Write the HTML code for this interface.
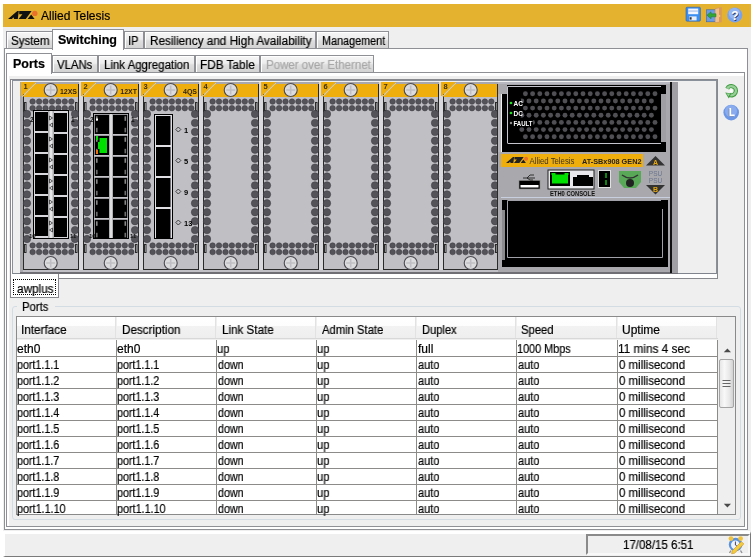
<!DOCTYPE html>
<html><head><meta charset="utf-8">
<style>
*{margin:0;padding:0;box-sizing:border-box}
html,body{width:754px;height:559px;overflow:hidden;background:#fff}
body{position:relative;font-family:"Liberation Sans",sans-serif;font-size:12px;color:#000}
.a{position:absolute}
.t{position:absolute;white-space:nowrap;line-height:12px;font-size:12px;transform-origin:0 0;will-change:transform;-webkit-text-stroke:0.2px currentColor}
.tab{position:absolute;border:1px solid #8f9095;border-bottom:none;background:linear-gradient(#f6f6f6,#ededed 45%,#dedede 55%,#d3d3d3);box-shadow:inset 1px 1px 0 #fff}
.tabsel{position:absolute;border:1px solid #8f9095;border-bottom:none;background:#fff}
.hc{position:absolute;top:317px;height:21px;background:linear-gradient(#fff 0,#fdfdfd 42%,#f2f2f2 44%,#eeeeee 100%);border-right:1px solid #e2e2e2}
.vl{position:absolute;width:1px;background:#8d8a8a}
.hl{position:absolute;height:1px;background:#8d8a8a}
svg text{font-family:"Liberation Sans",sans-serif}
</style></head><body>
<!-- app bg -->
<div class="a" style="left:3px;top:27px;width:748px;height:530px;background:#efefef"></div>
<!-- title bar -->
<div class="a" style="left:3px;top:4px;width:748px;height:23px;background:#e5b22f"></div>
<svg class="a" style="left:0;top:0" width="120" height="27">
<path d="M8 19L17.3 11H18.8L17.8 19H14.2L13.3 17.3L12 19Z" fill="#111"/>
<path d="M19.2 11H31.6L25.8 19H18.6L22.4 14.2H19.2Z" fill="#111"/>
<path d="M27.6 19L31.2 14.4L34.6 19Z" fill="#111"/>
<circle cx="34.8" cy="13.4" r="2.7" fill="#e8702a"/>
</svg>
<div class="t" style="left:41px;top:10px">Allied Telesis</div>
<svg class="a" style="left:680px;top:5px" width="70" height="22">
<rect x="6" y="2.2" width="14.4" height="14" rx="1" fill="#3b8ff0" stroke="#2a5fb0" stroke-width="0.6"/>
<rect x="8.2" y="3.6" width="10" height="5.6" fill="#f4f6ff"/>
<rect x="8.2" y="5.6" width="10" height="0.9" fill="#8fb0e0"/>
<rect x="9.2" y="11.4" width="7.4" height="4" fill="#e8ecf4"/><rect x="9.6" y="12.2" width="2" height="2.4" fill="#333"/>
<rect x="26.5" y="4.8" width="9" height="12" fill="#6c9ce4" stroke="#3a64a8" stroke-width="0.6"/>
<path d="M35 3.2L41.8 2v15.2L35 18z" fill="#d9995a"/>
<path d="M35.6 4L39 3.2v13.5l-3.4 0.6z" fill="#f0c08a"/>
<circle cx="39.6" cy="11" r="0.7" fill="#ffe080"/>
<path d="M27 10.2l4-3.4v2h5v3h-5v2z" fill="#34a834" stroke="#1f7a1f" stroke-width="0.5"/>
<circle cx="54.8" cy="10" r="7.6" fill="#7aa2ea"/>
<circle cx="54.3" cy="8.3" r="5.6" fill="#a8c4f6" opacity="0.55"/>
<text x="55.6" y="15.6" font-size="12" font-weight="bold" text-anchor="middle" fill="#2a3a70">?</text><text x="55" y="15" font-size="12" font-weight="bold" text-anchor="middle" fill="#fff">?</text>
</svg>

<!-- tab row 1 -->
<div class="tab" style="left:6px;top:31px;width:47px;height:17px"></div>
<div class="t" style="left:11px;top:35px;transform:scaleX(0.963)">System</div>
<div class="tab" style="left:124px;top:31px;width:20px;height:17px"></div>
<div class="t" style="left:128px;top:35px;transform:scaleX(0.93)">IP</div>
<div class="tab" style="left:144px;top:31px;width:172px;height:17px"></div>
<div class="t" style="left:150px;top:35px;transform:scaleX(0.978)">Resiliency and High Availability</div>
<div class="tab" style="left:316px;top:31px;width:73px;height:17px"></div>
<div class="t" style="left:322px;top:35px;transform:scaleX(0.903)">Management</div>
<!-- outer panel -->
<div class="a" style="left:4px;top:48px;width:744px;height:482px;border:1px solid #8f9095;background:#fff"></div>
<div class="tabsel" style="left:52px;top:29px;width:72px;height:21px"></div>
<div class="t" style="left:58px;top:34px;font-weight:bold;transform:scaleX(1.04)">Switching</div>

<!-- tab row 2 -->
<div class="tab" style="left:52px;top:55px;width:46px;height:17px"></div>
<div class="t" style="left:57px;top:59px;transform:scaleX(0.946)">VLANs</div>
<div class="tab" style="left:98px;top:55px;width:97px;height:17px"></div>
<div class="t" style="left:104px;top:59px;transform:scaleX(0.955)">Link Aggregation</div>
<div class="tab" style="left:195px;top:55px;width:65px;height:17px"></div>
<div class="t" style="left:200px;top:59px;transform:scaleX(0.982)">FDB Table</div>
<div class="tab" style="left:260px;top:55px;width:114px;height:17px"></div>
<div class="t" style="left:266px;top:59px;color:#a8a8a8;transform:scaleX(0.958)">Power over Ethernet</div>
<!-- inner panel -->
<div class="a" style="left:6px;top:72px;width:739px;height:455px;border:1px solid #8f9095;background:#fff"></div>
<div class="a" style="left:9px;top:76px;width:735px;height:450px;background:#efefef"></div>
<div class="tabsel" style="left:6px;top:53px;width:46px;height:21px"></div>
<div class="t" style="left:13px;top:58px;font-weight:bold;transform:scaleX(1.04)">Ports</div>

<!-- device frame -->
<div class="a" style="left:10px;top:79px;width:708px;height:200px;border:1px solid #88898e;background:#fff"></div>
<div class="a" style="left:12px;top:80px;width:705px;height:194px;border:1px solid #8a909a;border-bottom:1px solid #80848c;background:#efefef"></div>
<svg class="a" style="left:0;top:0;will-change:transform" width="754" height="559" viewBox="0 0 754 559">
<defs><linearGradient id="slv" x1="0" x2="1"><stop offset="0" stop-color="#9a9a9e"/><stop offset="0.5" stop-color="#f4f4f6"/><stop offset="1" stop-color="#9a9a9e"/></linearGradient></defs>
<rect x="20" y="82" width="658" height="191" fill="#a9a9ad"/>
<rect x="23" y="270" width="655" height="2" fill="#c0c0c6"/>
<rect x="20" y="272" width="658" height="2" fill="#6e6e74"/>
<rect x="79" y="82" width="4" height="188" fill="#d9d9dd"/>
<rect x="78" y="84" width="1" height="186" fill="#2a2a2a"/>
<rect x="83" y="84" width="1" height="186" fill="#2a2a2a"/>
<rect x="24" y="84" width="54" height="185" fill="#bfbfc4"/>
<rect x="23" y="84" width="1" height="186" fill="#2a2a2a"/>
<rect x="23" y="269" width="56" height="1" fill="#2a2a2a"/>
<polygon points="35,84 78,84 78,97 23,97" fill="#f0ae0c"/>
<polygon points="21,82 36,82 22,96 21,96" fill="#f0ae0c"/>
<line x1="36" y1="83" x2="22" y2="97" stroke="#d0ccb8" stroke-width="1"/>
<text x="23.5" y="88.5" font-size="7.5" font-weight="bold" fill="#3a3000">1</text>
<circle cx="50.7" cy="90" r="6.5" fill="#dcdcdf" stroke="#4a4a50" stroke-width="1.1"/>
<path d="M50.7 85.5V94.5M46.2 90H55.2" stroke="#c0c0c4" stroke-width="1.6"/>
<circle cx="50.7" cy="263" r="6.5" fill="#dcdcdf" stroke="#4a4a50" stroke-width="1.1"/>
<path d="M50.7 258.5V267.5M46.2 263H55.2" stroke="#c0c0c4" stroke-width="1.6"/>
<circle cx="32.6" cy="101.6" r="2.75" fill="#545359" stroke="#3a393e" stroke-width="0.5"/>
<circle cx="39.1" cy="101.6" r="2.75" fill="#545359" stroke="#3a393e" stroke-width="0.5"/>
<circle cx="45.5" cy="101.6" r="2.75" fill="#545359" stroke="#3a393e" stroke-width="0.5"/>
<circle cx="52.0" cy="101.6" r="2.75" fill="#545359" stroke="#3a393e" stroke-width="0.5"/>
<circle cx="58.4" cy="101.6" r="2.75" fill="#545359" stroke="#3a393e" stroke-width="0.5"/>
<circle cx="64.8" cy="101.6" r="2.75" fill="#545359" stroke="#3a393e" stroke-width="0.5"/>
<circle cx="71.3" cy="101.6" r="2.75" fill="#545359" stroke="#3a393e" stroke-width="0.5"/>
<circle cx="32.6" cy="108.2" r="2.75" fill="#545359" stroke="#3a393e" stroke-width="0.5"/>
<circle cx="39.1" cy="108.2" r="2.75" fill="#545359" stroke="#3a393e" stroke-width="0.5"/>
<circle cx="45.5" cy="108.2" r="2.75" fill="#545359" stroke="#3a393e" stroke-width="0.5"/>
<circle cx="52.0" cy="108.2" r="2.75" fill="#545359" stroke="#3a393e" stroke-width="0.5"/>
<circle cx="58.4" cy="108.2" r="2.75" fill="#545359" stroke="#3a393e" stroke-width="0.5"/>
<circle cx="64.8" cy="108.2" r="2.75" fill="#545359" stroke="#3a393e" stroke-width="0.5"/>
<circle cx="71.3" cy="108.2" r="2.75" fill="#545359" stroke="#3a393e" stroke-width="0.5"/>
<circle cx="32.6" cy="245.5" r="2.75" fill="#545359" stroke="#3a393e" stroke-width="0.5"/>
<circle cx="39.1" cy="245.5" r="2.75" fill="#545359" stroke="#3a393e" stroke-width="0.5"/>
<circle cx="45.5" cy="245.5" r="2.75" fill="#545359" stroke="#3a393e" stroke-width="0.5"/>
<circle cx="52.0" cy="245.5" r="2.75" fill="#545359" stroke="#3a393e" stroke-width="0.5"/>
<circle cx="58.4" cy="245.5" r="2.75" fill="#545359" stroke="#3a393e" stroke-width="0.5"/>
<circle cx="64.8" cy="245.5" r="2.75" fill="#545359" stroke="#3a393e" stroke-width="0.5"/>
<circle cx="71.3" cy="245.5" r="2.75" fill="#545359" stroke="#3a393e" stroke-width="0.5"/>
<circle cx="32.6" cy="252.1" r="2.75" fill="#545359" stroke="#3a393e" stroke-width="0.5"/>
<circle cx="39.1" cy="252.1" r="2.75" fill="#545359" stroke="#3a393e" stroke-width="0.5"/>
<circle cx="45.5" cy="252.1" r="2.75" fill="#545359" stroke="#3a393e" stroke-width="0.5"/>
<circle cx="52.0" cy="252.1" r="2.75" fill="#545359" stroke="#3a393e" stroke-width="0.5"/>
<circle cx="58.4" cy="252.1" r="2.75" fill="#545359" stroke="#3a393e" stroke-width="0.5"/>
<circle cx="64.8" cy="252.1" r="2.75" fill="#545359" stroke="#3a393e" stroke-width="0.5"/>
<circle cx="71.3" cy="252.1" r="2.75" fill="#545359" stroke="#3a393e" stroke-width="0.5"/>
<rect x="24.5" y="102.5" width="1.5" height="8" fill="#e0e0e4" stroke="#2a2a2a" stroke-width="1"/>
<rect x="75.5" y="102.5" width="1.5" height="8" fill="#e0e0e4" stroke="#2a2a2a" stroke-width="1"/>
<rect x="24.5" y="244.5" width="1.5" height="8" fill="#e0e0e4" stroke="#2a2a2a" stroke-width="1"/>
<rect x="75.5" y="244.5" width="1.5" height="8" fill="#e0e0e4" stroke="#2a2a2a" stroke-width="1"/>
<circle cx="27" cy="114.0" r="3.7" fill="#545359" stroke="#3a393e" stroke-width="0.5"/>
<circle cx="75" cy="114.0" r="3.7" fill="#545359" stroke="#3a393e" stroke-width="0.5"/>
<circle cx="27" cy="122.9" r="3.7" fill="#545359" stroke="#3a393e" stroke-width="0.5"/>
<circle cx="75" cy="122.9" r="3.7" fill="#545359" stroke="#3a393e" stroke-width="0.5"/>
<circle cx="27" cy="131.9" r="3.7" fill="#545359" stroke="#3a393e" stroke-width="0.5"/>
<circle cx="75" cy="131.9" r="3.7" fill="#545359" stroke="#3a393e" stroke-width="0.5"/>
<circle cx="27" cy="140.8" r="3.7" fill="#545359" stroke="#3a393e" stroke-width="0.5"/>
<circle cx="75" cy="140.8" r="3.7" fill="#545359" stroke="#3a393e" stroke-width="0.5"/>
<circle cx="27" cy="149.7" r="3.7" fill="#545359" stroke="#3a393e" stroke-width="0.5"/>
<circle cx="75" cy="149.7" r="3.7" fill="#545359" stroke="#3a393e" stroke-width="0.5"/>
<circle cx="27" cy="158.7" r="3.7" fill="#545359" stroke="#3a393e" stroke-width="0.5"/>
<circle cx="75" cy="158.7" r="3.7" fill="#545359" stroke="#3a393e" stroke-width="0.5"/>
<circle cx="27" cy="167.6" r="3.7" fill="#545359" stroke="#3a393e" stroke-width="0.5"/>
<circle cx="75" cy="167.6" r="3.7" fill="#545359" stroke="#3a393e" stroke-width="0.5"/>
<circle cx="27" cy="176.5" r="3.7" fill="#545359" stroke="#3a393e" stroke-width="0.5"/>
<circle cx="75" cy="176.5" r="3.7" fill="#545359" stroke="#3a393e" stroke-width="0.5"/>
<circle cx="27" cy="185.4" r="3.7" fill="#545359" stroke="#3a393e" stroke-width="0.5"/>
<circle cx="75" cy="185.4" r="3.7" fill="#545359" stroke="#3a393e" stroke-width="0.5"/>
<circle cx="27" cy="194.4" r="3.7" fill="#545359" stroke="#3a393e" stroke-width="0.5"/>
<circle cx="75" cy="194.4" r="3.7" fill="#545359" stroke="#3a393e" stroke-width="0.5"/>
<circle cx="27" cy="203.3" r="3.7" fill="#545359" stroke="#3a393e" stroke-width="0.5"/>
<circle cx="75" cy="203.3" r="3.7" fill="#545359" stroke="#3a393e" stroke-width="0.5"/>
<circle cx="27" cy="212.2" r="3.7" fill="#545359" stroke="#3a393e" stroke-width="0.5"/>
<circle cx="75" cy="212.2" r="3.7" fill="#545359" stroke="#3a393e" stroke-width="0.5"/>
<circle cx="27" cy="221.2" r="3.7" fill="#545359" stroke="#3a393e" stroke-width="0.5"/>
<circle cx="75" cy="221.2" r="3.7" fill="#545359" stroke="#3a393e" stroke-width="0.5"/>
<circle cx="27" cy="230.1" r="3.7" fill="#545359" stroke="#3a393e" stroke-width="0.5"/>
<circle cx="75" cy="230.1" r="3.7" fill="#545359" stroke="#3a393e" stroke-width="0.5"/>
<circle cx="27" cy="239.0" r="3.7" fill="#545359" stroke="#3a393e" stroke-width="0.5"/>
<circle cx="75" cy="239.0" r="3.7" fill="#545359" stroke="#3a393e" stroke-width="0.5"/>
<rect x="139" y="82" width="4" height="188" fill="#d9d9dd"/>
<rect x="138" y="84" width="1" height="186" fill="#2a2a2a"/>
<rect x="143" y="84" width="1" height="186" fill="#2a2a2a"/>
<rect x="84" y="84" width="54" height="185" fill="#bfbfc4"/>
<rect x="83" y="84" width="1" height="186" fill="#2a2a2a"/>
<rect x="83" y="269" width="56" height="1" fill="#2a2a2a"/>
<polygon points="95,84 138,84 138,97 83,97" fill="#f0ae0c"/>
<polygon points="81,82 96,82 82,96 81,96" fill="#f0ae0c"/>
<line x1="96" y1="83" x2="82" y2="97" stroke="#d0ccb8" stroke-width="1"/>
<text x="83.5" y="88.5" font-size="7.5" font-weight="bold" fill="#3a3000">2</text>
<circle cx="110.7" cy="90" r="6.5" fill="#dcdcdf" stroke="#4a4a50" stroke-width="1.1"/>
<path d="M110.7 85.5V94.5M106.2 90H115.2" stroke="#c0c0c4" stroke-width="1.6"/>
<circle cx="110.7" cy="263" r="6.5" fill="#dcdcdf" stroke="#4a4a50" stroke-width="1.1"/>
<path d="M110.7 258.5V267.5M106.2 263H115.2" stroke="#c0c0c4" stroke-width="1.6"/>
<circle cx="92.6" cy="101.6" r="2.75" fill="#545359" stroke="#3a393e" stroke-width="0.5"/>
<circle cx="99.0" cy="101.6" r="2.75" fill="#545359" stroke="#3a393e" stroke-width="0.5"/>
<circle cx="105.5" cy="101.6" r="2.75" fill="#545359" stroke="#3a393e" stroke-width="0.5"/>
<circle cx="111.9" cy="101.6" r="2.75" fill="#545359" stroke="#3a393e" stroke-width="0.5"/>
<circle cx="118.4" cy="101.6" r="2.75" fill="#545359" stroke="#3a393e" stroke-width="0.5"/>
<circle cx="124.8" cy="101.6" r="2.75" fill="#545359" stroke="#3a393e" stroke-width="0.5"/>
<circle cx="131.3" cy="101.6" r="2.75" fill="#545359" stroke="#3a393e" stroke-width="0.5"/>
<circle cx="92.6" cy="108.2" r="2.75" fill="#545359" stroke="#3a393e" stroke-width="0.5"/>
<circle cx="99.0" cy="108.2" r="2.75" fill="#545359" stroke="#3a393e" stroke-width="0.5"/>
<circle cx="105.5" cy="108.2" r="2.75" fill="#545359" stroke="#3a393e" stroke-width="0.5"/>
<circle cx="111.9" cy="108.2" r="2.75" fill="#545359" stroke="#3a393e" stroke-width="0.5"/>
<circle cx="118.4" cy="108.2" r="2.75" fill="#545359" stroke="#3a393e" stroke-width="0.5"/>
<circle cx="124.8" cy="108.2" r="2.75" fill="#545359" stroke="#3a393e" stroke-width="0.5"/>
<circle cx="131.3" cy="108.2" r="2.75" fill="#545359" stroke="#3a393e" stroke-width="0.5"/>
<circle cx="92.6" cy="245.5" r="2.75" fill="#545359" stroke="#3a393e" stroke-width="0.5"/>
<circle cx="99.0" cy="245.5" r="2.75" fill="#545359" stroke="#3a393e" stroke-width="0.5"/>
<circle cx="105.5" cy="245.5" r="2.75" fill="#545359" stroke="#3a393e" stroke-width="0.5"/>
<circle cx="111.9" cy="245.5" r="2.75" fill="#545359" stroke="#3a393e" stroke-width="0.5"/>
<circle cx="118.4" cy="245.5" r="2.75" fill="#545359" stroke="#3a393e" stroke-width="0.5"/>
<circle cx="124.8" cy="245.5" r="2.75" fill="#545359" stroke="#3a393e" stroke-width="0.5"/>
<circle cx="131.3" cy="245.5" r="2.75" fill="#545359" stroke="#3a393e" stroke-width="0.5"/>
<circle cx="92.6" cy="252.1" r="2.75" fill="#545359" stroke="#3a393e" stroke-width="0.5"/>
<circle cx="99.0" cy="252.1" r="2.75" fill="#545359" stroke="#3a393e" stroke-width="0.5"/>
<circle cx="105.5" cy="252.1" r="2.75" fill="#545359" stroke="#3a393e" stroke-width="0.5"/>
<circle cx="111.9" cy="252.1" r="2.75" fill="#545359" stroke="#3a393e" stroke-width="0.5"/>
<circle cx="118.4" cy="252.1" r="2.75" fill="#545359" stroke="#3a393e" stroke-width="0.5"/>
<circle cx="124.8" cy="252.1" r="2.75" fill="#545359" stroke="#3a393e" stroke-width="0.5"/>
<circle cx="131.3" cy="252.1" r="2.75" fill="#545359" stroke="#3a393e" stroke-width="0.5"/>
<rect x="84.5" y="102.5" width="1.5" height="8" fill="#e0e0e4" stroke="#2a2a2a" stroke-width="1"/>
<rect x="135.5" y="102.5" width="1.5" height="8" fill="#e0e0e4" stroke="#2a2a2a" stroke-width="1"/>
<rect x="84.5" y="244.5" width="1.5" height="8" fill="#e0e0e4" stroke="#2a2a2a" stroke-width="1"/>
<rect x="135.5" y="244.5" width="1.5" height="8" fill="#e0e0e4" stroke="#2a2a2a" stroke-width="1"/>
<circle cx="87" cy="114.0" r="3.7" fill="#545359" stroke="#3a393e" stroke-width="0.5"/>
<circle cx="135" cy="114.0" r="3.7" fill="#545359" stroke="#3a393e" stroke-width="0.5"/>
<circle cx="87" cy="122.9" r="3.7" fill="#545359" stroke="#3a393e" stroke-width="0.5"/>
<circle cx="135" cy="122.9" r="3.7" fill="#545359" stroke="#3a393e" stroke-width="0.5"/>
<circle cx="87" cy="131.9" r="3.7" fill="#545359" stroke="#3a393e" stroke-width="0.5"/>
<circle cx="135" cy="131.9" r="3.7" fill="#545359" stroke="#3a393e" stroke-width="0.5"/>
<circle cx="87" cy="140.8" r="3.7" fill="#545359" stroke="#3a393e" stroke-width="0.5"/>
<circle cx="135" cy="140.8" r="3.7" fill="#545359" stroke="#3a393e" stroke-width="0.5"/>
<circle cx="87" cy="149.7" r="3.7" fill="#545359" stroke="#3a393e" stroke-width="0.5"/>
<circle cx="135" cy="149.7" r="3.7" fill="#545359" stroke="#3a393e" stroke-width="0.5"/>
<circle cx="87" cy="158.7" r="3.7" fill="#545359" stroke="#3a393e" stroke-width="0.5"/>
<circle cx="135" cy="158.7" r="3.7" fill="#545359" stroke="#3a393e" stroke-width="0.5"/>
<circle cx="87" cy="167.6" r="3.7" fill="#545359" stroke="#3a393e" stroke-width="0.5"/>
<circle cx="135" cy="167.6" r="3.7" fill="#545359" stroke="#3a393e" stroke-width="0.5"/>
<circle cx="87" cy="176.5" r="3.7" fill="#545359" stroke="#3a393e" stroke-width="0.5"/>
<circle cx="135" cy="176.5" r="3.7" fill="#545359" stroke="#3a393e" stroke-width="0.5"/>
<circle cx="87" cy="185.4" r="3.7" fill="#545359" stroke="#3a393e" stroke-width="0.5"/>
<circle cx="135" cy="185.4" r="3.7" fill="#545359" stroke="#3a393e" stroke-width="0.5"/>
<circle cx="87" cy="194.4" r="3.7" fill="#545359" stroke="#3a393e" stroke-width="0.5"/>
<circle cx="135" cy="194.4" r="3.7" fill="#545359" stroke="#3a393e" stroke-width="0.5"/>
<circle cx="87" cy="203.3" r="3.7" fill="#545359" stroke="#3a393e" stroke-width="0.5"/>
<circle cx="135" cy="203.3" r="3.7" fill="#545359" stroke="#3a393e" stroke-width="0.5"/>
<circle cx="87" cy="212.2" r="3.7" fill="#545359" stroke="#3a393e" stroke-width="0.5"/>
<circle cx="135" cy="212.2" r="3.7" fill="#545359" stroke="#3a393e" stroke-width="0.5"/>
<circle cx="87" cy="221.2" r="3.7" fill="#545359" stroke="#3a393e" stroke-width="0.5"/>
<circle cx="135" cy="221.2" r="3.7" fill="#545359" stroke="#3a393e" stroke-width="0.5"/>
<circle cx="87" cy="230.1" r="3.7" fill="#545359" stroke="#3a393e" stroke-width="0.5"/>
<circle cx="135" cy="230.1" r="3.7" fill="#545359" stroke="#3a393e" stroke-width="0.5"/>
<circle cx="87" cy="239.0" r="3.7" fill="#545359" stroke="#3a393e" stroke-width="0.5"/>
<circle cx="135" cy="239.0" r="3.7" fill="#545359" stroke="#3a393e" stroke-width="0.5"/>
<rect x="199" y="82" width="4" height="188" fill="#d9d9dd"/>
<rect x="198" y="84" width="1" height="186" fill="#2a2a2a"/>
<rect x="203" y="84" width="1" height="186" fill="#2a2a2a"/>
<rect x="144" y="84" width="54" height="185" fill="#bfbfc4"/>
<rect x="143" y="84" width="1" height="186" fill="#2a2a2a"/>
<rect x="143" y="269" width="56" height="1" fill="#2a2a2a"/>
<polygon points="155,84 198,84 198,97 143,97" fill="#f0ae0c"/>
<polygon points="141,82 156,82 142,96 141,96" fill="#f0ae0c"/>
<line x1="156" y1="83" x2="142" y2="97" stroke="#d0ccb8" stroke-width="1"/>
<text x="143.5" y="88.5" font-size="7.5" font-weight="bold" fill="#3a3000">3</text>
<circle cx="170.7" cy="90" r="6.5" fill="#dcdcdf" stroke="#4a4a50" stroke-width="1.1"/>
<path d="M170.7 85.5V94.5M166.2 90H175.2" stroke="#c0c0c4" stroke-width="1.6"/>
<circle cx="170.7" cy="263" r="6.5" fill="#dcdcdf" stroke="#4a4a50" stroke-width="1.1"/>
<path d="M170.7 258.5V267.5M166.2 263H175.2" stroke="#c0c0c4" stroke-width="1.6"/>
<circle cx="152.6" cy="101.6" r="2.75" fill="#545359" stroke="#3a393e" stroke-width="0.5"/>
<circle cx="159.0" cy="101.6" r="2.75" fill="#545359" stroke="#3a393e" stroke-width="0.5"/>
<circle cx="165.5" cy="101.6" r="2.75" fill="#545359" stroke="#3a393e" stroke-width="0.5"/>
<circle cx="171.9" cy="101.6" r="2.75" fill="#545359" stroke="#3a393e" stroke-width="0.5"/>
<circle cx="178.4" cy="101.6" r="2.75" fill="#545359" stroke="#3a393e" stroke-width="0.5"/>
<circle cx="184.8" cy="101.6" r="2.75" fill="#545359" stroke="#3a393e" stroke-width="0.5"/>
<circle cx="191.3" cy="101.6" r="2.75" fill="#545359" stroke="#3a393e" stroke-width="0.5"/>
<circle cx="152.6" cy="108.2" r="2.75" fill="#545359" stroke="#3a393e" stroke-width="0.5"/>
<circle cx="159.0" cy="108.2" r="2.75" fill="#545359" stroke="#3a393e" stroke-width="0.5"/>
<circle cx="165.5" cy="108.2" r="2.75" fill="#545359" stroke="#3a393e" stroke-width="0.5"/>
<circle cx="171.9" cy="108.2" r="2.75" fill="#545359" stroke="#3a393e" stroke-width="0.5"/>
<circle cx="178.4" cy="108.2" r="2.75" fill="#545359" stroke="#3a393e" stroke-width="0.5"/>
<circle cx="184.8" cy="108.2" r="2.75" fill="#545359" stroke="#3a393e" stroke-width="0.5"/>
<circle cx="191.3" cy="108.2" r="2.75" fill="#545359" stroke="#3a393e" stroke-width="0.5"/>
<circle cx="152.6" cy="245.5" r="2.75" fill="#545359" stroke="#3a393e" stroke-width="0.5"/>
<circle cx="159.0" cy="245.5" r="2.75" fill="#545359" stroke="#3a393e" stroke-width="0.5"/>
<circle cx="165.5" cy="245.5" r="2.75" fill="#545359" stroke="#3a393e" stroke-width="0.5"/>
<circle cx="171.9" cy="245.5" r="2.75" fill="#545359" stroke="#3a393e" stroke-width="0.5"/>
<circle cx="178.4" cy="245.5" r="2.75" fill="#545359" stroke="#3a393e" stroke-width="0.5"/>
<circle cx="184.8" cy="245.5" r="2.75" fill="#545359" stroke="#3a393e" stroke-width="0.5"/>
<circle cx="191.3" cy="245.5" r="2.75" fill="#545359" stroke="#3a393e" stroke-width="0.5"/>
<circle cx="152.6" cy="252.1" r="2.75" fill="#545359" stroke="#3a393e" stroke-width="0.5"/>
<circle cx="159.0" cy="252.1" r="2.75" fill="#545359" stroke="#3a393e" stroke-width="0.5"/>
<circle cx="165.5" cy="252.1" r="2.75" fill="#545359" stroke="#3a393e" stroke-width="0.5"/>
<circle cx="171.9" cy="252.1" r="2.75" fill="#545359" stroke="#3a393e" stroke-width="0.5"/>
<circle cx="178.4" cy="252.1" r="2.75" fill="#545359" stroke="#3a393e" stroke-width="0.5"/>
<circle cx="184.8" cy="252.1" r="2.75" fill="#545359" stroke="#3a393e" stroke-width="0.5"/>
<circle cx="191.3" cy="252.1" r="2.75" fill="#545359" stroke="#3a393e" stroke-width="0.5"/>
<rect x="144.5" y="102.5" width="1.5" height="8" fill="#e0e0e4" stroke="#2a2a2a" stroke-width="1"/>
<rect x="195.5" y="102.5" width="1.5" height="8" fill="#e0e0e4" stroke="#2a2a2a" stroke-width="1"/>
<rect x="144.5" y="244.5" width="1.5" height="8" fill="#e0e0e4" stroke="#2a2a2a" stroke-width="1"/>
<rect x="195.5" y="244.5" width="1.5" height="8" fill="#e0e0e4" stroke="#2a2a2a" stroke-width="1"/>
<circle cx="147" cy="114.0" r="3.7" fill="#545359" stroke="#3a393e" stroke-width="0.5"/>
<circle cx="195" cy="114.0" r="3.7" fill="#545359" stroke="#3a393e" stroke-width="0.5"/>
<circle cx="147" cy="122.9" r="3.7" fill="#545359" stroke="#3a393e" stroke-width="0.5"/>
<circle cx="195" cy="122.9" r="3.7" fill="#545359" stroke="#3a393e" stroke-width="0.5"/>
<circle cx="147" cy="131.9" r="3.7" fill="#545359" stroke="#3a393e" stroke-width="0.5"/>
<circle cx="195" cy="131.9" r="3.7" fill="#545359" stroke="#3a393e" stroke-width="0.5"/>
<circle cx="147" cy="140.8" r="3.7" fill="#545359" stroke="#3a393e" stroke-width="0.5"/>
<circle cx="195" cy="140.8" r="3.7" fill="#545359" stroke="#3a393e" stroke-width="0.5"/>
<circle cx="147" cy="149.7" r="3.7" fill="#545359" stroke="#3a393e" stroke-width="0.5"/>
<circle cx="195" cy="149.7" r="3.7" fill="#545359" stroke="#3a393e" stroke-width="0.5"/>
<circle cx="147" cy="158.7" r="3.7" fill="#545359" stroke="#3a393e" stroke-width="0.5"/>
<circle cx="195" cy="158.7" r="3.7" fill="#545359" stroke="#3a393e" stroke-width="0.5"/>
<circle cx="147" cy="167.6" r="3.7" fill="#545359" stroke="#3a393e" stroke-width="0.5"/>
<circle cx="195" cy="167.6" r="3.7" fill="#545359" stroke="#3a393e" stroke-width="0.5"/>
<circle cx="147" cy="176.5" r="3.7" fill="#545359" stroke="#3a393e" stroke-width="0.5"/>
<circle cx="195" cy="176.5" r="3.7" fill="#545359" stroke="#3a393e" stroke-width="0.5"/>
<circle cx="147" cy="185.4" r="3.7" fill="#545359" stroke="#3a393e" stroke-width="0.5"/>
<circle cx="195" cy="185.4" r="3.7" fill="#545359" stroke="#3a393e" stroke-width="0.5"/>
<circle cx="147" cy="194.4" r="3.7" fill="#545359" stroke="#3a393e" stroke-width="0.5"/>
<circle cx="195" cy="194.4" r="3.7" fill="#545359" stroke="#3a393e" stroke-width="0.5"/>
<circle cx="147" cy="203.3" r="3.7" fill="#545359" stroke="#3a393e" stroke-width="0.5"/>
<circle cx="195" cy="203.3" r="3.7" fill="#545359" stroke="#3a393e" stroke-width="0.5"/>
<circle cx="147" cy="212.2" r="3.7" fill="#545359" stroke="#3a393e" stroke-width="0.5"/>
<circle cx="195" cy="212.2" r="3.7" fill="#545359" stroke="#3a393e" stroke-width="0.5"/>
<circle cx="147" cy="221.2" r="3.7" fill="#545359" stroke="#3a393e" stroke-width="0.5"/>
<circle cx="195" cy="221.2" r="3.7" fill="#545359" stroke="#3a393e" stroke-width="0.5"/>
<circle cx="147" cy="230.1" r="3.7" fill="#545359" stroke="#3a393e" stroke-width="0.5"/>
<circle cx="195" cy="230.1" r="3.7" fill="#545359" stroke="#3a393e" stroke-width="0.5"/>
<circle cx="147" cy="239.0" r="3.7" fill="#545359" stroke="#3a393e" stroke-width="0.5"/>
<circle cx="195" cy="239.0" r="3.7" fill="#545359" stroke="#3a393e" stroke-width="0.5"/>
<rect x="259" y="82" width="4" height="188" fill="#d9d9dd"/>
<rect x="258" y="84" width="1" height="186" fill="#2a2a2a"/>
<rect x="263" y="84" width="1" height="186" fill="#2a2a2a"/>
<rect x="204" y="84" width="54" height="185" fill="#bfbfc4"/>
<rect x="203" y="84" width="1" height="186" fill="#2a2a2a"/>
<rect x="203" y="269" width="56" height="1" fill="#2a2a2a"/>
<polygon points="215,84 258,84 258,97 203,97" fill="#f0ae0c"/>
<polygon points="201,82 216,82 202,96 201,96" fill="#f0ae0c"/>
<line x1="216" y1="83" x2="202" y2="97" stroke="#d0ccb8" stroke-width="1"/>
<text x="203.5" y="88.5" font-size="7.5" font-weight="bold" fill="#3a3000">4</text>
<circle cx="230.7" cy="90" r="6.5" fill="#dcdcdf" stroke="#4a4a50" stroke-width="1.1"/>
<path d="M230.7 85.5V94.5M226.2 90H235.2" stroke="#c0c0c4" stroke-width="1.6"/>
<circle cx="230.7" cy="263" r="6.5" fill="#dcdcdf" stroke="#4a4a50" stroke-width="1.1"/>
<path d="M230.7 258.5V267.5M226.2 263H235.2" stroke="#c0c0c4" stroke-width="1.6"/>
<circle cx="212.6" cy="101.6" r="2.75" fill="#545359" stroke="#3a393e" stroke-width="0.5"/>
<circle cx="219.0" cy="101.6" r="2.75" fill="#545359" stroke="#3a393e" stroke-width="0.5"/>
<circle cx="225.5" cy="101.6" r="2.75" fill="#545359" stroke="#3a393e" stroke-width="0.5"/>
<circle cx="231.9" cy="101.6" r="2.75" fill="#545359" stroke="#3a393e" stroke-width="0.5"/>
<circle cx="238.4" cy="101.6" r="2.75" fill="#545359" stroke="#3a393e" stroke-width="0.5"/>
<circle cx="244.8" cy="101.6" r="2.75" fill="#545359" stroke="#3a393e" stroke-width="0.5"/>
<circle cx="251.3" cy="101.6" r="2.75" fill="#545359" stroke="#3a393e" stroke-width="0.5"/>
<circle cx="212.6" cy="108.2" r="2.75" fill="#545359" stroke="#3a393e" stroke-width="0.5"/>
<circle cx="219.0" cy="108.2" r="2.75" fill="#545359" stroke="#3a393e" stroke-width="0.5"/>
<circle cx="225.5" cy="108.2" r="2.75" fill="#545359" stroke="#3a393e" stroke-width="0.5"/>
<circle cx="231.9" cy="108.2" r="2.75" fill="#545359" stroke="#3a393e" stroke-width="0.5"/>
<circle cx="238.4" cy="108.2" r="2.75" fill="#545359" stroke="#3a393e" stroke-width="0.5"/>
<circle cx="244.8" cy="108.2" r="2.75" fill="#545359" stroke="#3a393e" stroke-width="0.5"/>
<circle cx="251.3" cy="108.2" r="2.75" fill="#545359" stroke="#3a393e" stroke-width="0.5"/>
<circle cx="212.6" cy="245.5" r="2.75" fill="#545359" stroke="#3a393e" stroke-width="0.5"/>
<circle cx="219.0" cy="245.5" r="2.75" fill="#545359" stroke="#3a393e" stroke-width="0.5"/>
<circle cx="225.5" cy="245.5" r="2.75" fill="#545359" stroke="#3a393e" stroke-width="0.5"/>
<circle cx="231.9" cy="245.5" r="2.75" fill="#545359" stroke="#3a393e" stroke-width="0.5"/>
<circle cx="238.4" cy="245.5" r="2.75" fill="#545359" stroke="#3a393e" stroke-width="0.5"/>
<circle cx="244.8" cy="245.5" r="2.75" fill="#545359" stroke="#3a393e" stroke-width="0.5"/>
<circle cx="251.3" cy="245.5" r="2.75" fill="#545359" stroke="#3a393e" stroke-width="0.5"/>
<circle cx="212.6" cy="252.1" r="2.75" fill="#545359" stroke="#3a393e" stroke-width="0.5"/>
<circle cx="219.0" cy="252.1" r="2.75" fill="#545359" stroke="#3a393e" stroke-width="0.5"/>
<circle cx="225.5" cy="252.1" r="2.75" fill="#545359" stroke="#3a393e" stroke-width="0.5"/>
<circle cx="231.9" cy="252.1" r="2.75" fill="#545359" stroke="#3a393e" stroke-width="0.5"/>
<circle cx="238.4" cy="252.1" r="2.75" fill="#545359" stroke="#3a393e" stroke-width="0.5"/>
<circle cx="244.8" cy="252.1" r="2.75" fill="#545359" stroke="#3a393e" stroke-width="0.5"/>
<circle cx="251.3" cy="252.1" r="2.75" fill="#545359" stroke="#3a393e" stroke-width="0.5"/>
<rect x="204.5" y="102.5" width="1.5" height="8" fill="#e0e0e4" stroke="#2a2a2a" stroke-width="1"/>
<rect x="255.5" y="102.5" width="1.5" height="8" fill="#e0e0e4" stroke="#2a2a2a" stroke-width="1"/>
<rect x="204.5" y="244.5" width="1.5" height="8" fill="#e0e0e4" stroke="#2a2a2a" stroke-width="1"/>
<rect x="255.5" y="244.5" width="1.5" height="8" fill="#e0e0e4" stroke="#2a2a2a" stroke-width="1"/>
<circle cx="207" cy="114.0" r="3.7" fill="#545359" stroke="#3a393e" stroke-width="0.5"/>
<circle cx="255" cy="114.0" r="3.7" fill="#545359" stroke="#3a393e" stroke-width="0.5"/>
<circle cx="207" cy="122.9" r="3.7" fill="#545359" stroke="#3a393e" stroke-width="0.5"/>
<circle cx="255" cy="122.9" r="3.7" fill="#545359" stroke="#3a393e" stroke-width="0.5"/>
<circle cx="207" cy="131.9" r="3.7" fill="#545359" stroke="#3a393e" stroke-width="0.5"/>
<circle cx="255" cy="131.9" r="3.7" fill="#545359" stroke="#3a393e" stroke-width="0.5"/>
<circle cx="207" cy="140.8" r="3.7" fill="#545359" stroke="#3a393e" stroke-width="0.5"/>
<circle cx="255" cy="140.8" r="3.7" fill="#545359" stroke="#3a393e" stroke-width="0.5"/>
<circle cx="207" cy="149.7" r="3.7" fill="#545359" stroke="#3a393e" stroke-width="0.5"/>
<circle cx="255" cy="149.7" r="3.7" fill="#545359" stroke="#3a393e" stroke-width="0.5"/>
<circle cx="207" cy="158.7" r="3.7" fill="#545359" stroke="#3a393e" stroke-width="0.5"/>
<circle cx="255" cy="158.7" r="3.7" fill="#545359" stroke="#3a393e" stroke-width="0.5"/>
<circle cx="207" cy="167.6" r="3.7" fill="#545359" stroke="#3a393e" stroke-width="0.5"/>
<circle cx="255" cy="167.6" r="3.7" fill="#545359" stroke="#3a393e" stroke-width="0.5"/>
<circle cx="207" cy="176.5" r="3.7" fill="#545359" stroke="#3a393e" stroke-width="0.5"/>
<circle cx="255" cy="176.5" r="3.7" fill="#545359" stroke="#3a393e" stroke-width="0.5"/>
<circle cx="207" cy="185.4" r="3.7" fill="#545359" stroke="#3a393e" stroke-width="0.5"/>
<circle cx="255" cy="185.4" r="3.7" fill="#545359" stroke="#3a393e" stroke-width="0.5"/>
<circle cx="207" cy="194.4" r="3.7" fill="#545359" stroke="#3a393e" stroke-width="0.5"/>
<circle cx="255" cy="194.4" r="3.7" fill="#545359" stroke="#3a393e" stroke-width="0.5"/>
<circle cx="207" cy="203.3" r="3.7" fill="#545359" stroke="#3a393e" stroke-width="0.5"/>
<circle cx="255" cy="203.3" r="3.7" fill="#545359" stroke="#3a393e" stroke-width="0.5"/>
<circle cx="207" cy="212.2" r="3.7" fill="#545359" stroke="#3a393e" stroke-width="0.5"/>
<circle cx="255" cy="212.2" r="3.7" fill="#545359" stroke="#3a393e" stroke-width="0.5"/>
<circle cx="207" cy="221.2" r="3.7" fill="#545359" stroke="#3a393e" stroke-width="0.5"/>
<circle cx="255" cy="221.2" r="3.7" fill="#545359" stroke="#3a393e" stroke-width="0.5"/>
<circle cx="207" cy="230.1" r="3.7" fill="#545359" stroke="#3a393e" stroke-width="0.5"/>
<circle cx="255" cy="230.1" r="3.7" fill="#545359" stroke="#3a393e" stroke-width="0.5"/>
<circle cx="207" cy="239.0" r="3.7" fill="#545359" stroke="#3a393e" stroke-width="0.5"/>
<circle cx="255" cy="239.0" r="3.7" fill="#545359" stroke="#3a393e" stroke-width="0.5"/>
<rect x="319" y="82" width="4" height="188" fill="#d9d9dd"/>
<rect x="318" y="84" width="1" height="186" fill="#2a2a2a"/>
<rect x="323" y="84" width="1" height="186" fill="#2a2a2a"/>
<rect x="264" y="84" width="54" height="185" fill="#bfbfc4"/>
<rect x="263" y="84" width="1" height="186" fill="#2a2a2a"/>
<rect x="263" y="269" width="56" height="1" fill="#2a2a2a"/>
<polygon points="275,84 318,84 318,97 263,97" fill="#f0ae0c"/>
<polygon points="261,82 276,82 262,96 261,96" fill="#f0ae0c"/>
<line x1="276" y1="83" x2="262" y2="97" stroke="#d0ccb8" stroke-width="1"/>
<text x="263.5" y="88.5" font-size="7.5" font-weight="bold" fill="#3a3000">5</text>
<circle cx="290.7" cy="90" r="6.5" fill="#dcdcdf" stroke="#4a4a50" stroke-width="1.1"/>
<path d="M290.7 85.5V94.5M286.2 90H295.2" stroke="#c0c0c4" stroke-width="1.6"/>
<circle cx="290.7" cy="263" r="6.5" fill="#dcdcdf" stroke="#4a4a50" stroke-width="1.1"/>
<path d="M290.7 258.5V267.5M286.2 263H295.2" stroke="#c0c0c4" stroke-width="1.6"/>
<circle cx="272.6" cy="101.6" r="2.75" fill="#545359" stroke="#3a393e" stroke-width="0.5"/>
<circle cx="279.1" cy="101.6" r="2.75" fill="#545359" stroke="#3a393e" stroke-width="0.5"/>
<circle cx="285.5" cy="101.6" r="2.75" fill="#545359" stroke="#3a393e" stroke-width="0.5"/>
<circle cx="292.0" cy="101.6" r="2.75" fill="#545359" stroke="#3a393e" stroke-width="0.5"/>
<circle cx="298.4" cy="101.6" r="2.75" fill="#545359" stroke="#3a393e" stroke-width="0.5"/>
<circle cx="304.9" cy="101.6" r="2.75" fill="#545359" stroke="#3a393e" stroke-width="0.5"/>
<circle cx="311.3" cy="101.6" r="2.75" fill="#545359" stroke="#3a393e" stroke-width="0.5"/>
<circle cx="272.6" cy="108.2" r="2.75" fill="#545359" stroke="#3a393e" stroke-width="0.5"/>
<circle cx="279.1" cy="108.2" r="2.75" fill="#545359" stroke="#3a393e" stroke-width="0.5"/>
<circle cx="285.5" cy="108.2" r="2.75" fill="#545359" stroke="#3a393e" stroke-width="0.5"/>
<circle cx="292.0" cy="108.2" r="2.75" fill="#545359" stroke="#3a393e" stroke-width="0.5"/>
<circle cx="298.4" cy="108.2" r="2.75" fill="#545359" stroke="#3a393e" stroke-width="0.5"/>
<circle cx="304.9" cy="108.2" r="2.75" fill="#545359" stroke="#3a393e" stroke-width="0.5"/>
<circle cx="311.3" cy="108.2" r="2.75" fill="#545359" stroke="#3a393e" stroke-width="0.5"/>
<circle cx="272.6" cy="245.5" r="2.75" fill="#545359" stroke="#3a393e" stroke-width="0.5"/>
<circle cx="279.1" cy="245.5" r="2.75" fill="#545359" stroke="#3a393e" stroke-width="0.5"/>
<circle cx="285.5" cy="245.5" r="2.75" fill="#545359" stroke="#3a393e" stroke-width="0.5"/>
<circle cx="292.0" cy="245.5" r="2.75" fill="#545359" stroke="#3a393e" stroke-width="0.5"/>
<circle cx="298.4" cy="245.5" r="2.75" fill="#545359" stroke="#3a393e" stroke-width="0.5"/>
<circle cx="304.9" cy="245.5" r="2.75" fill="#545359" stroke="#3a393e" stroke-width="0.5"/>
<circle cx="311.3" cy="245.5" r="2.75" fill="#545359" stroke="#3a393e" stroke-width="0.5"/>
<circle cx="272.6" cy="252.1" r="2.75" fill="#545359" stroke="#3a393e" stroke-width="0.5"/>
<circle cx="279.1" cy="252.1" r="2.75" fill="#545359" stroke="#3a393e" stroke-width="0.5"/>
<circle cx="285.5" cy="252.1" r="2.75" fill="#545359" stroke="#3a393e" stroke-width="0.5"/>
<circle cx="292.0" cy="252.1" r="2.75" fill="#545359" stroke="#3a393e" stroke-width="0.5"/>
<circle cx="298.4" cy="252.1" r="2.75" fill="#545359" stroke="#3a393e" stroke-width="0.5"/>
<circle cx="304.9" cy="252.1" r="2.75" fill="#545359" stroke="#3a393e" stroke-width="0.5"/>
<circle cx="311.3" cy="252.1" r="2.75" fill="#545359" stroke="#3a393e" stroke-width="0.5"/>
<rect x="264.5" y="102.5" width="1.5" height="8" fill="#e0e0e4" stroke="#2a2a2a" stroke-width="1"/>
<rect x="315.5" y="102.5" width="1.5" height="8" fill="#e0e0e4" stroke="#2a2a2a" stroke-width="1"/>
<rect x="264.5" y="244.5" width="1.5" height="8" fill="#e0e0e4" stroke="#2a2a2a" stroke-width="1"/>
<rect x="315.5" y="244.5" width="1.5" height="8" fill="#e0e0e4" stroke="#2a2a2a" stroke-width="1"/>
<circle cx="267" cy="114.0" r="3.7" fill="#545359" stroke="#3a393e" stroke-width="0.5"/>
<circle cx="315" cy="114.0" r="3.7" fill="#545359" stroke="#3a393e" stroke-width="0.5"/>
<circle cx="267" cy="122.9" r="3.7" fill="#545359" stroke="#3a393e" stroke-width="0.5"/>
<circle cx="315" cy="122.9" r="3.7" fill="#545359" stroke="#3a393e" stroke-width="0.5"/>
<circle cx="267" cy="131.9" r="3.7" fill="#545359" stroke="#3a393e" stroke-width="0.5"/>
<circle cx="315" cy="131.9" r="3.7" fill="#545359" stroke="#3a393e" stroke-width="0.5"/>
<circle cx="267" cy="140.8" r="3.7" fill="#545359" stroke="#3a393e" stroke-width="0.5"/>
<circle cx="315" cy="140.8" r="3.7" fill="#545359" stroke="#3a393e" stroke-width="0.5"/>
<circle cx="267" cy="149.7" r="3.7" fill="#545359" stroke="#3a393e" stroke-width="0.5"/>
<circle cx="315" cy="149.7" r="3.7" fill="#545359" stroke="#3a393e" stroke-width="0.5"/>
<circle cx="267" cy="158.7" r="3.7" fill="#545359" stroke="#3a393e" stroke-width="0.5"/>
<circle cx="315" cy="158.7" r="3.7" fill="#545359" stroke="#3a393e" stroke-width="0.5"/>
<circle cx="267" cy="167.6" r="3.7" fill="#545359" stroke="#3a393e" stroke-width="0.5"/>
<circle cx="315" cy="167.6" r="3.7" fill="#545359" stroke="#3a393e" stroke-width="0.5"/>
<circle cx="267" cy="176.5" r="3.7" fill="#545359" stroke="#3a393e" stroke-width="0.5"/>
<circle cx="315" cy="176.5" r="3.7" fill="#545359" stroke="#3a393e" stroke-width="0.5"/>
<circle cx="267" cy="185.4" r="3.7" fill="#545359" stroke="#3a393e" stroke-width="0.5"/>
<circle cx="315" cy="185.4" r="3.7" fill="#545359" stroke="#3a393e" stroke-width="0.5"/>
<circle cx="267" cy="194.4" r="3.7" fill="#545359" stroke="#3a393e" stroke-width="0.5"/>
<circle cx="315" cy="194.4" r="3.7" fill="#545359" stroke="#3a393e" stroke-width="0.5"/>
<circle cx="267" cy="203.3" r="3.7" fill="#545359" stroke="#3a393e" stroke-width="0.5"/>
<circle cx="315" cy="203.3" r="3.7" fill="#545359" stroke="#3a393e" stroke-width="0.5"/>
<circle cx="267" cy="212.2" r="3.7" fill="#545359" stroke="#3a393e" stroke-width="0.5"/>
<circle cx="315" cy="212.2" r="3.7" fill="#545359" stroke="#3a393e" stroke-width="0.5"/>
<circle cx="267" cy="221.2" r="3.7" fill="#545359" stroke="#3a393e" stroke-width="0.5"/>
<circle cx="315" cy="221.2" r="3.7" fill="#545359" stroke="#3a393e" stroke-width="0.5"/>
<circle cx="267" cy="230.1" r="3.7" fill="#545359" stroke="#3a393e" stroke-width="0.5"/>
<circle cx="315" cy="230.1" r="3.7" fill="#545359" stroke="#3a393e" stroke-width="0.5"/>
<circle cx="267" cy="239.0" r="3.7" fill="#545359" stroke="#3a393e" stroke-width="0.5"/>
<circle cx="315" cy="239.0" r="3.7" fill="#545359" stroke="#3a393e" stroke-width="0.5"/>
<rect x="379" y="82" width="4" height="188" fill="#d9d9dd"/>
<rect x="378" y="84" width="1" height="186" fill="#2a2a2a"/>
<rect x="383" y="84" width="1" height="186" fill="#2a2a2a"/>
<rect x="324" y="84" width="54" height="185" fill="#bfbfc4"/>
<rect x="323" y="84" width="1" height="186" fill="#2a2a2a"/>
<rect x="323" y="269" width="56" height="1" fill="#2a2a2a"/>
<polygon points="335,84 378,84 378,97 323,97" fill="#f0ae0c"/>
<polygon points="321,82 336,82 322,96 321,96" fill="#f0ae0c"/>
<line x1="336" y1="83" x2="322" y2="97" stroke="#d0ccb8" stroke-width="1"/>
<text x="323.5" y="88.5" font-size="7.5" font-weight="bold" fill="#3a3000">6</text>
<circle cx="350.7" cy="90" r="6.5" fill="#dcdcdf" stroke="#4a4a50" stroke-width="1.1"/>
<path d="M350.7 85.5V94.5M346.2 90H355.2" stroke="#c0c0c4" stroke-width="1.6"/>
<circle cx="350.7" cy="263" r="6.5" fill="#dcdcdf" stroke="#4a4a50" stroke-width="1.1"/>
<path d="M350.7 258.5V267.5M346.2 263H355.2" stroke="#c0c0c4" stroke-width="1.6"/>
<circle cx="332.6" cy="101.6" r="2.75" fill="#545359" stroke="#3a393e" stroke-width="0.5"/>
<circle cx="339.1" cy="101.6" r="2.75" fill="#545359" stroke="#3a393e" stroke-width="0.5"/>
<circle cx="345.5" cy="101.6" r="2.75" fill="#545359" stroke="#3a393e" stroke-width="0.5"/>
<circle cx="352.0" cy="101.6" r="2.75" fill="#545359" stroke="#3a393e" stroke-width="0.5"/>
<circle cx="358.4" cy="101.6" r="2.75" fill="#545359" stroke="#3a393e" stroke-width="0.5"/>
<circle cx="364.9" cy="101.6" r="2.75" fill="#545359" stroke="#3a393e" stroke-width="0.5"/>
<circle cx="371.3" cy="101.6" r="2.75" fill="#545359" stroke="#3a393e" stroke-width="0.5"/>
<circle cx="332.6" cy="108.2" r="2.75" fill="#545359" stroke="#3a393e" stroke-width="0.5"/>
<circle cx="339.1" cy="108.2" r="2.75" fill="#545359" stroke="#3a393e" stroke-width="0.5"/>
<circle cx="345.5" cy="108.2" r="2.75" fill="#545359" stroke="#3a393e" stroke-width="0.5"/>
<circle cx="352.0" cy="108.2" r="2.75" fill="#545359" stroke="#3a393e" stroke-width="0.5"/>
<circle cx="358.4" cy="108.2" r="2.75" fill="#545359" stroke="#3a393e" stroke-width="0.5"/>
<circle cx="364.9" cy="108.2" r="2.75" fill="#545359" stroke="#3a393e" stroke-width="0.5"/>
<circle cx="371.3" cy="108.2" r="2.75" fill="#545359" stroke="#3a393e" stroke-width="0.5"/>
<circle cx="332.6" cy="245.5" r="2.75" fill="#545359" stroke="#3a393e" stroke-width="0.5"/>
<circle cx="339.1" cy="245.5" r="2.75" fill="#545359" stroke="#3a393e" stroke-width="0.5"/>
<circle cx="345.5" cy="245.5" r="2.75" fill="#545359" stroke="#3a393e" stroke-width="0.5"/>
<circle cx="352.0" cy="245.5" r="2.75" fill="#545359" stroke="#3a393e" stroke-width="0.5"/>
<circle cx="358.4" cy="245.5" r="2.75" fill="#545359" stroke="#3a393e" stroke-width="0.5"/>
<circle cx="364.9" cy="245.5" r="2.75" fill="#545359" stroke="#3a393e" stroke-width="0.5"/>
<circle cx="371.3" cy="245.5" r="2.75" fill="#545359" stroke="#3a393e" stroke-width="0.5"/>
<circle cx="332.6" cy="252.1" r="2.75" fill="#545359" stroke="#3a393e" stroke-width="0.5"/>
<circle cx="339.1" cy="252.1" r="2.75" fill="#545359" stroke="#3a393e" stroke-width="0.5"/>
<circle cx="345.5" cy="252.1" r="2.75" fill="#545359" stroke="#3a393e" stroke-width="0.5"/>
<circle cx="352.0" cy="252.1" r="2.75" fill="#545359" stroke="#3a393e" stroke-width="0.5"/>
<circle cx="358.4" cy="252.1" r="2.75" fill="#545359" stroke="#3a393e" stroke-width="0.5"/>
<circle cx="364.9" cy="252.1" r="2.75" fill="#545359" stroke="#3a393e" stroke-width="0.5"/>
<circle cx="371.3" cy="252.1" r="2.75" fill="#545359" stroke="#3a393e" stroke-width="0.5"/>
<rect x="324.5" y="102.5" width="1.5" height="8" fill="#e0e0e4" stroke="#2a2a2a" stroke-width="1"/>
<rect x="375.5" y="102.5" width="1.5" height="8" fill="#e0e0e4" stroke="#2a2a2a" stroke-width="1"/>
<rect x="324.5" y="244.5" width="1.5" height="8" fill="#e0e0e4" stroke="#2a2a2a" stroke-width="1"/>
<rect x="375.5" y="244.5" width="1.5" height="8" fill="#e0e0e4" stroke="#2a2a2a" stroke-width="1"/>
<circle cx="327" cy="114.0" r="3.7" fill="#545359" stroke="#3a393e" stroke-width="0.5"/>
<circle cx="375" cy="114.0" r="3.7" fill="#545359" stroke="#3a393e" stroke-width="0.5"/>
<circle cx="327" cy="122.9" r="3.7" fill="#545359" stroke="#3a393e" stroke-width="0.5"/>
<circle cx="375" cy="122.9" r="3.7" fill="#545359" stroke="#3a393e" stroke-width="0.5"/>
<circle cx="327" cy="131.9" r="3.7" fill="#545359" stroke="#3a393e" stroke-width="0.5"/>
<circle cx="375" cy="131.9" r="3.7" fill="#545359" stroke="#3a393e" stroke-width="0.5"/>
<circle cx="327" cy="140.8" r="3.7" fill="#545359" stroke="#3a393e" stroke-width="0.5"/>
<circle cx="375" cy="140.8" r="3.7" fill="#545359" stroke="#3a393e" stroke-width="0.5"/>
<circle cx="327" cy="149.7" r="3.7" fill="#545359" stroke="#3a393e" stroke-width="0.5"/>
<circle cx="375" cy="149.7" r="3.7" fill="#545359" stroke="#3a393e" stroke-width="0.5"/>
<circle cx="327" cy="158.7" r="3.7" fill="#545359" stroke="#3a393e" stroke-width="0.5"/>
<circle cx="375" cy="158.7" r="3.7" fill="#545359" stroke="#3a393e" stroke-width="0.5"/>
<circle cx="327" cy="167.6" r="3.7" fill="#545359" stroke="#3a393e" stroke-width="0.5"/>
<circle cx="375" cy="167.6" r="3.7" fill="#545359" stroke="#3a393e" stroke-width="0.5"/>
<circle cx="327" cy="176.5" r="3.7" fill="#545359" stroke="#3a393e" stroke-width="0.5"/>
<circle cx="375" cy="176.5" r="3.7" fill="#545359" stroke="#3a393e" stroke-width="0.5"/>
<circle cx="327" cy="185.4" r="3.7" fill="#545359" stroke="#3a393e" stroke-width="0.5"/>
<circle cx="375" cy="185.4" r="3.7" fill="#545359" stroke="#3a393e" stroke-width="0.5"/>
<circle cx="327" cy="194.4" r="3.7" fill="#545359" stroke="#3a393e" stroke-width="0.5"/>
<circle cx="375" cy="194.4" r="3.7" fill="#545359" stroke="#3a393e" stroke-width="0.5"/>
<circle cx="327" cy="203.3" r="3.7" fill="#545359" stroke="#3a393e" stroke-width="0.5"/>
<circle cx="375" cy="203.3" r="3.7" fill="#545359" stroke="#3a393e" stroke-width="0.5"/>
<circle cx="327" cy="212.2" r="3.7" fill="#545359" stroke="#3a393e" stroke-width="0.5"/>
<circle cx="375" cy="212.2" r="3.7" fill="#545359" stroke="#3a393e" stroke-width="0.5"/>
<circle cx="327" cy="221.2" r="3.7" fill="#545359" stroke="#3a393e" stroke-width="0.5"/>
<circle cx="375" cy="221.2" r="3.7" fill="#545359" stroke="#3a393e" stroke-width="0.5"/>
<circle cx="327" cy="230.1" r="3.7" fill="#545359" stroke="#3a393e" stroke-width="0.5"/>
<circle cx="375" cy="230.1" r="3.7" fill="#545359" stroke="#3a393e" stroke-width="0.5"/>
<circle cx="327" cy="239.0" r="3.7" fill="#545359" stroke="#3a393e" stroke-width="0.5"/>
<circle cx="375" cy="239.0" r="3.7" fill="#545359" stroke="#3a393e" stroke-width="0.5"/>
<rect x="439" y="82" width="4" height="188" fill="#d9d9dd"/>
<rect x="438" y="84" width="1" height="186" fill="#2a2a2a"/>
<rect x="443" y="84" width="1" height="186" fill="#2a2a2a"/>
<rect x="384" y="84" width="54" height="185" fill="#bfbfc4"/>
<rect x="383" y="84" width="1" height="186" fill="#2a2a2a"/>
<rect x="383" y="269" width="56" height="1" fill="#2a2a2a"/>
<polygon points="395,84 438,84 438,97 383,97" fill="#f0ae0c"/>
<polygon points="381,82 396,82 382,96 381,96" fill="#f0ae0c"/>
<line x1="396" y1="83" x2="382" y2="97" stroke="#d0ccb8" stroke-width="1"/>
<text x="383.5" y="88.5" font-size="7.5" font-weight="bold" fill="#3a3000">7</text>
<circle cx="410.7" cy="90" r="6.5" fill="#dcdcdf" stroke="#4a4a50" stroke-width="1.1"/>
<path d="M410.7 85.5V94.5M406.2 90H415.2" stroke="#c0c0c4" stroke-width="1.6"/>
<circle cx="410.7" cy="263" r="6.5" fill="#dcdcdf" stroke="#4a4a50" stroke-width="1.1"/>
<path d="M410.7 258.5V267.5M406.2 263H415.2" stroke="#c0c0c4" stroke-width="1.6"/>
<circle cx="392.6" cy="101.6" r="2.75" fill="#545359" stroke="#3a393e" stroke-width="0.5"/>
<circle cx="399.1" cy="101.6" r="2.75" fill="#545359" stroke="#3a393e" stroke-width="0.5"/>
<circle cx="405.5" cy="101.6" r="2.75" fill="#545359" stroke="#3a393e" stroke-width="0.5"/>
<circle cx="412.0" cy="101.6" r="2.75" fill="#545359" stroke="#3a393e" stroke-width="0.5"/>
<circle cx="418.4" cy="101.6" r="2.75" fill="#545359" stroke="#3a393e" stroke-width="0.5"/>
<circle cx="424.9" cy="101.6" r="2.75" fill="#545359" stroke="#3a393e" stroke-width="0.5"/>
<circle cx="431.3" cy="101.6" r="2.75" fill="#545359" stroke="#3a393e" stroke-width="0.5"/>
<circle cx="392.6" cy="108.2" r="2.75" fill="#545359" stroke="#3a393e" stroke-width="0.5"/>
<circle cx="399.1" cy="108.2" r="2.75" fill="#545359" stroke="#3a393e" stroke-width="0.5"/>
<circle cx="405.5" cy="108.2" r="2.75" fill="#545359" stroke="#3a393e" stroke-width="0.5"/>
<circle cx="412.0" cy="108.2" r="2.75" fill="#545359" stroke="#3a393e" stroke-width="0.5"/>
<circle cx="418.4" cy="108.2" r="2.75" fill="#545359" stroke="#3a393e" stroke-width="0.5"/>
<circle cx="424.9" cy="108.2" r="2.75" fill="#545359" stroke="#3a393e" stroke-width="0.5"/>
<circle cx="431.3" cy="108.2" r="2.75" fill="#545359" stroke="#3a393e" stroke-width="0.5"/>
<circle cx="392.6" cy="245.5" r="2.75" fill="#545359" stroke="#3a393e" stroke-width="0.5"/>
<circle cx="399.1" cy="245.5" r="2.75" fill="#545359" stroke="#3a393e" stroke-width="0.5"/>
<circle cx="405.5" cy="245.5" r="2.75" fill="#545359" stroke="#3a393e" stroke-width="0.5"/>
<circle cx="412.0" cy="245.5" r="2.75" fill="#545359" stroke="#3a393e" stroke-width="0.5"/>
<circle cx="418.4" cy="245.5" r="2.75" fill="#545359" stroke="#3a393e" stroke-width="0.5"/>
<circle cx="424.9" cy="245.5" r="2.75" fill="#545359" stroke="#3a393e" stroke-width="0.5"/>
<circle cx="431.3" cy="245.5" r="2.75" fill="#545359" stroke="#3a393e" stroke-width="0.5"/>
<circle cx="392.6" cy="252.1" r="2.75" fill="#545359" stroke="#3a393e" stroke-width="0.5"/>
<circle cx="399.1" cy="252.1" r="2.75" fill="#545359" stroke="#3a393e" stroke-width="0.5"/>
<circle cx="405.5" cy="252.1" r="2.75" fill="#545359" stroke="#3a393e" stroke-width="0.5"/>
<circle cx="412.0" cy="252.1" r="2.75" fill="#545359" stroke="#3a393e" stroke-width="0.5"/>
<circle cx="418.4" cy="252.1" r="2.75" fill="#545359" stroke="#3a393e" stroke-width="0.5"/>
<circle cx="424.9" cy="252.1" r="2.75" fill="#545359" stroke="#3a393e" stroke-width="0.5"/>
<circle cx="431.3" cy="252.1" r="2.75" fill="#545359" stroke="#3a393e" stroke-width="0.5"/>
<rect x="384.5" y="102.5" width="1.5" height="8" fill="#e0e0e4" stroke="#2a2a2a" stroke-width="1"/>
<rect x="435.5" y="102.5" width="1.5" height="8" fill="#e0e0e4" stroke="#2a2a2a" stroke-width="1"/>
<rect x="384.5" y="244.5" width="1.5" height="8" fill="#e0e0e4" stroke="#2a2a2a" stroke-width="1"/>
<rect x="435.5" y="244.5" width="1.5" height="8" fill="#e0e0e4" stroke="#2a2a2a" stroke-width="1"/>
<circle cx="387" cy="114.0" r="3.7" fill="#545359" stroke="#3a393e" stroke-width="0.5"/>
<circle cx="435" cy="114.0" r="3.7" fill="#545359" stroke="#3a393e" stroke-width="0.5"/>
<circle cx="387" cy="122.9" r="3.7" fill="#545359" stroke="#3a393e" stroke-width="0.5"/>
<circle cx="435" cy="122.9" r="3.7" fill="#545359" stroke="#3a393e" stroke-width="0.5"/>
<circle cx="387" cy="131.9" r="3.7" fill="#545359" stroke="#3a393e" stroke-width="0.5"/>
<circle cx="435" cy="131.9" r="3.7" fill="#545359" stroke="#3a393e" stroke-width="0.5"/>
<circle cx="387" cy="140.8" r="3.7" fill="#545359" stroke="#3a393e" stroke-width="0.5"/>
<circle cx="435" cy="140.8" r="3.7" fill="#545359" stroke="#3a393e" stroke-width="0.5"/>
<circle cx="387" cy="149.7" r="3.7" fill="#545359" stroke="#3a393e" stroke-width="0.5"/>
<circle cx="435" cy="149.7" r="3.7" fill="#545359" stroke="#3a393e" stroke-width="0.5"/>
<circle cx="387" cy="158.7" r="3.7" fill="#545359" stroke="#3a393e" stroke-width="0.5"/>
<circle cx="435" cy="158.7" r="3.7" fill="#545359" stroke="#3a393e" stroke-width="0.5"/>
<circle cx="387" cy="167.6" r="3.7" fill="#545359" stroke="#3a393e" stroke-width="0.5"/>
<circle cx="435" cy="167.6" r="3.7" fill="#545359" stroke="#3a393e" stroke-width="0.5"/>
<circle cx="387" cy="176.5" r="3.7" fill="#545359" stroke="#3a393e" stroke-width="0.5"/>
<circle cx="435" cy="176.5" r="3.7" fill="#545359" stroke="#3a393e" stroke-width="0.5"/>
<circle cx="387" cy="185.4" r="3.7" fill="#545359" stroke="#3a393e" stroke-width="0.5"/>
<circle cx="435" cy="185.4" r="3.7" fill="#545359" stroke="#3a393e" stroke-width="0.5"/>
<circle cx="387" cy="194.4" r="3.7" fill="#545359" stroke="#3a393e" stroke-width="0.5"/>
<circle cx="435" cy="194.4" r="3.7" fill="#545359" stroke="#3a393e" stroke-width="0.5"/>
<circle cx="387" cy="203.3" r="3.7" fill="#545359" stroke="#3a393e" stroke-width="0.5"/>
<circle cx="435" cy="203.3" r="3.7" fill="#545359" stroke="#3a393e" stroke-width="0.5"/>
<circle cx="387" cy="212.2" r="3.7" fill="#545359" stroke="#3a393e" stroke-width="0.5"/>
<circle cx="435" cy="212.2" r="3.7" fill="#545359" stroke="#3a393e" stroke-width="0.5"/>
<circle cx="387" cy="221.2" r="3.7" fill="#545359" stroke="#3a393e" stroke-width="0.5"/>
<circle cx="435" cy="221.2" r="3.7" fill="#545359" stroke="#3a393e" stroke-width="0.5"/>
<circle cx="387" cy="230.1" r="3.7" fill="#545359" stroke="#3a393e" stroke-width="0.5"/>
<circle cx="435" cy="230.1" r="3.7" fill="#545359" stroke="#3a393e" stroke-width="0.5"/>
<circle cx="387" cy="239.0" r="3.7" fill="#545359" stroke="#3a393e" stroke-width="0.5"/>
<circle cx="435" cy="239.0" r="3.7" fill="#545359" stroke="#3a393e" stroke-width="0.5"/>
<rect x="499" y="82" width="4" height="188" fill="#d9d9dd"/>
<rect x="498" y="84" width="1" height="186" fill="#2a2a2a"/>

<rect x="444" y="84" width="54" height="185" fill="#bfbfc4"/>
<rect x="443" y="84" width="1" height="186" fill="#2a2a2a"/>
<rect x="443" y="269" width="56" height="1" fill="#2a2a2a"/>
<polygon points="455,84 498,84 498,97 443,97" fill="#f0ae0c"/>
<polygon points="441,82 456,82 442,96 441,96" fill="#f0ae0c"/>
<line x1="456" y1="83" x2="442" y2="97" stroke="#d0ccb8" stroke-width="1"/>
<text x="443.5" y="88.5" font-size="7.5" font-weight="bold" fill="#3a3000">8</text>
<circle cx="470.7" cy="90" r="6.5" fill="#dcdcdf" stroke="#4a4a50" stroke-width="1.1"/>
<path d="M470.7 85.5V94.5M466.2 90H475.2" stroke="#c0c0c4" stroke-width="1.6"/>
<circle cx="470.7" cy="263" r="6.5" fill="#dcdcdf" stroke="#4a4a50" stroke-width="1.1"/>
<path d="M470.7 258.5V267.5M466.2 263H475.2" stroke="#c0c0c4" stroke-width="1.6"/>
<circle cx="452.6" cy="101.6" r="2.75" fill="#545359" stroke="#3a393e" stroke-width="0.5"/>
<circle cx="459.1" cy="101.6" r="2.75" fill="#545359" stroke="#3a393e" stroke-width="0.5"/>
<circle cx="465.5" cy="101.6" r="2.75" fill="#545359" stroke="#3a393e" stroke-width="0.5"/>
<circle cx="472.0" cy="101.6" r="2.75" fill="#545359" stroke="#3a393e" stroke-width="0.5"/>
<circle cx="478.4" cy="101.6" r="2.75" fill="#545359" stroke="#3a393e" stroke-width="0.5"/>
<circle cx="484.9" cy="101.6" r="2.75" fill="#545359" stroke="#3a393e" stroke-width="0.5"/>
<circle cx="491.3" cy="101.6" r="2.75" fill="#545359" stroke="#3a393e" stroke-width="0.5"/>
<circle cx="452.6" cy="108.2" r="2.75" fill="#545359" stroke="#3a393e" stroke-width="0.5"/>
<circle cx="459.1" cy="108.2" r="2.75" fill="#545359" stroke="#3a393e" stroke-width="0.5"/>
<circle cx="465.5" cy="108.2" r="2.75" fill="#545359" stroke="#3a393e" stroke-width="0.5"/>
<circle cx="472.0" cy="108.2" r="2.75" fill="#545359" stroke="#3a393e" stroke-width="0.5"/>
<circle cx="478.4" cy="108.2" r="2.75" fill="#545359" stroke="#3a393e" stroke-width="0.5"/>
<circle cx="484.9" cy="108.2" r="2.75" fill="#545359" stroke="#3a393e" stroke-width="0.5"/>
<circle cx="491.3" cy="108.2" r="2.75" fill="#545359" stroke="#3a393e" stroke-width="0.5"/>
<circle cx="452.6" cy="245.5" r="2.75" fill="#545359" stroke="#3a393e" stroke-width="0.5"/>
<circle cx="459.1" cy="245.5" r="2.75" fill="#545359" stroke="#3a393e" stroke-width="0.5"/>
<circle cx="465.5" cy="245.5" r="2.75" fill="#545359" stroke="#3a393e" stroke-width="0.5"/>
<circle cx="472.0" cy="245.5" r="2.75" fill="#545359" stroke="#3a393e" stroke-width="0.5"/>
<circle cx="478.4" cy="245.5" r="2.75" fill="#545359" stroke="#3a393e" stroke-width="0.5"/>
<circle cx="484.9" cy="245.5" r="2.75" fill="#545359" stroke="#3a393e" stroke-width="0.5"/>
<circle cx="491.3" cy="245.5" r="2.75" fill="#545359" stroke="#3a393e" stroke-width="0.5"/>
<circle cx="452.6" cy="252.1" r="2.75" fill="#545359" stroke="#3a393e" stroke-width="0.5"/>
<circle cx="459.1" cy="252.1" r="2.75" fill="#545359" stroke="#3a393e" stroke-width="0.5"/>
<circle cx="465.5" cy="252.1" r="2.75" fill="#545359" stroke="#3a393e" stroke-width="0.5"/>
<circle cx="472.0" cy="252.1" r="2.75" fill="#545359" stroke="#3a393e" stroke-width="0.5"/>
<circle cx="478.4" cy="252.1" r="2.75" fill="#545359" stroke="#3a393e" stroke-width="0.5"/>
<circle cx="484.9" cy="252.1" r="2.75" fill="#545359" stroke="#3a393e" stroke-width="0.5"/>
<circle cx="491.3" cy="252.1" r="2.75" fill="#545359" stroke="#3a393e" stroke-width="0.5"/>
<rect x="444.5" y="102.5" width="1.5" height="8" fill="#e0e0e4" stroke="#2a2a2a" stroke-width="1"/>
<rect x="495.5" y="102.5" width="1.5" height="8" fill="#e0e0e4" stroke="#2a2a2a" stroke-width="1"/>
<rect x="444.5" y="244.5" width="1.5" height="8" fill="#e0e0e4" stroke="#2a2a2a" stroke-width="1"/>
<rect x="495.5" y="244.5" width="1.5" height="8" fill="#e0e0e4" stroke="#2a2a2a" stroke-width="1"/>
<circle cx="447" cy="114.0" r="3.7" fill="#545359" stroke="#3a393e" stroke-width="0.5"/>
<circle cx="495" cy="114.0" r="3.7" fill="#545359" stroke="#3a393e" stroke-width="0.5"/>
<circle cx="447" cy="122.9" r="3.7" fill="#545359" stroke="#3a393e" stroke-width="0.5"/>
<circle cx="495" cy="122.9" r="3.7" fill="#545359" stroke="#3a393e" stroke-width="0.5"/>
<circle cx="447" cy="131.9" r="3.7" fill="#545359" stroke="#3a393e" stroke-width="0.5"/>
<circle cx="495" cy="131.9" r="3.7" fill="#545359" stroke="#3a393e" stroke-width="0.5"/>
<circle cx="447" cy="140.8" r="3.7" fill="#545359" stroke="#3a393e" stroke-width="0.5"/>
<circle cx="495" cy="140.8" r="3.7" fill="#545359" stroke="#3a393e" stroke-width="0.5"/>
<circle cx="447" cy="149.7" r="3.7" fill="#545359" stroke="#3a393e" stroke-width="0.5"/>
<circle cx="495" cy="149.7" r="3.7" fill="#545359" stroke="#3a393e" stroke-width="0.5"/>
<circle cx="447" cy="158.7" r="3.7" fill="#545359" stroke="#3a393e" stroke-width="0.5"/>
<circle cx="495" cy="158.7" r="3.7" fill="#545359" stroke="#3a393e" stroke-width="0.5"/>
<circle cx="447" cy="167.6" r="3.7" fill="#545359" stroke="#3a393e" stroke-width="0.5"/>
<circle cx="495" cy="167.6" r="3.7" fill="#545359" stroke="#3a393e" stroke-width="0.5"/>
<circle cx="447" cy="176.5" r="3.7" fill="#545359" stroke="#3a393e" stroke-width="0.5"/>
<circle cx="495" cy="176.5" r="3.7" fill="#545359" stroke="#3a393e" stroke-width="0.5"/>
<circle cx="447" cy="185.4" r="3.7" fill="#545359" stroke="#3a393e" stroke-width="0.5"/>
<circle cx="495" cy="185.4" r="3.7" fill="#545359" stroke="#3a393e" stroke-width="0.5"/>
<circle cx="447" cy="194.4" r="3.7" fill="#545359" stroke="#3a393e" stroke-width="0.5"/>
<circle cx="495" cy="194.4" r="3.7" fill="#545359" stroke="#3a393e" stroke-width="0.5"/>
<circle cx="447" cy="203.3" r="3.7" fill="#545359" stroke="#3a393e" stroke-width="0.5"/>
<circle cx="495" cy="203.3" r="3.7" fill="#545359" stroke="#3a393e" stroke-width="0.5"/>
<circle cx="447" cy="212.2" r="3.7" fill="#545359" stroke="#3a393e" stroke-width="0.5"/>
<circle cx="495" cy="212.2" r="3.7" fill="#545359" stroke="#3a393e" stroke-width="0.5"/>
<circle cx="447" cy="221.2" r="3.7" fill="#545359" stroke="#3a393e" stroke-width="0.5"/>
<circle cx="495" cy="221.2" r="3.7" fill="#545359" stroke="#3a393e" stroke-width="0.5"/>
<circle cx="447" cy="230.1" r="3.7" fill="#545359" stroke="#3a393e" stroke-width="0.5"/>
<circle cx="495" cy="230.1" r="3.7" fill="#545359" stroke="#3a393e" stroke-width="0.5"/>
<circle cx="447" cy="239.0" r="3.7" fill="#545359" stroke="#3a393e" stroke-width="0.5"/>
<circle cx="495" cy="239.0" r="3.7" fill="#545359" stroke="#3a393e" stroke-width="0.5"/>
<text x="77" y="94.3" font-size="7" font-weight="bold" text-anchor="end" fill="#2a2410">12XS</text>
<text x="137" y="94.3" font-size="7" font-weight="bold" text-anchor="end" fill="#2a2410">12XT</text>
<text x="197" y="94.3" font-size="7" font-weight="bold" text-anchor="end" fill="#2a2410">4QS</text>
<rect x="33.5" y="110.5" width="35" height="128" fill="#d8d8dc" stroke="#000" stroke-width="1"/>
<rect x="48" y="111" width="6" height="127" fill="url(#slv)"/>
<rect x="35" y="112" width="13" height="19" fill="#000"/>
<rect x="54" y="113" width="13" height="19" fill="#000"/>
<path d="M49.5 116l3 2l-3 2z M52.5 123l-3 2l3 2z" fill="none" stroke="#333" stroke-width="0.8"/>
<rect x="35" y="133" width="13" height="19" fill="#000"/>
<rect x="54" y="134" width="13" height="19" fill="#000"/>
<path d="M49.5 137l3 2l-3 2z M52.5 144l-3 2l3 2z" fill="none" stroke="#333" stroke-width="0.8"/>
<rect x="35" y="154" width="13" height="19" fill="#000"/>
<rect x="54" y="155" width="13" height="19" fill="#000"/>
<path d="M49.5 158l3 2l-3 2z M52.5 165l-3 2l3 2z" fill="none" stroke="#333" stroke-width="0.8"/>
<rect x="35" y="175" width="13" height="19" fill="#000"/>
<rect x="54" y="176" width="13" height="19" fill="#000"/>
<path d="M49.5 179l3 2l-3 2z M52.5 186l-3 2l3 2z" fill="none" stroke="#333" stroke-width="0.8"/>
<rect x="35" y="196" width="13" height="19" fill="#000"/>
<rect x="54" y="197" width="13" height="19" fill="#000"/>
<path d="M49.5 200l3 2l-3 2z M52.5 207l-3 2l3 2z" fill="none" stroke="#333" stroke-width="0.8"/>
<rect x="35" y="217" width="13" height="19" fill="#000"/>
<rect x="54" y="218" width="13" height="19" fill="#000"/>
<path d="M49.5 221l3 2l-3 2z M52.5 228l-3 2l3 2z" fill="none" stroke="#333" stroke-width="0.8"/>
<rect x="93.5" y="113.5" width="35" height="125" fill="#c4c4c8" stroke="#000" stroke-width="1"/>
<rect x="109" y="114" width="4" height="124" fill="url(#slv)"/>
<rect x="94.7" y="114.8" width="14.3" height="19.2" fill="#000"/>
<rect x="113" y="114.8" width="14.3" height="19.2" fill="#000"/>
<rect x="96" y="116.3" width="1.6" height="4.5" fill="#8a8a8a"/><rect x="96" y="127.8" width="1.6" height="4.5" fill="#707070"/>
<rect x="124.5" y="116.3" width="1.6" height="4.5" fill="#8a8a8a"/><rect x="124.5" y="127.8" width="1.6" height="4.5" fill="#707070"/>
<rect x="94.7" y="135.8" width="14.3" height="19.2" fill="#000"/>
<rect x="113" y="135.8" width="14.3" height="19.2" fill="#000"/>
<rect x="96" y="137.3" width="1.6" height="4.5" fill="#8a8a8a"/><rect x="96" y="148.8" width="1.6" height="4.5" fill="#707070"/>
<rect x="124.5" y="137.3" width="1.6" height="4.5" fill="#8a8a8a"/><rect x="124.5" y="148.8" width="1.6" height="4.5" fill="#707070"/>
<rect x="94.7" y="156.8" width="14.3" height="19.2" fill="#000"/>
<rect x="113" y="156.8" width="14.3" height="19.2" fill="#000"/>
<rect x="96" y="158.3" width="1.6" height="4.5" fill="#8a8a8a"/><rect x="96" y="169.8" width="1.6" height="4.5" fill="#707070"/>
<rect x="124.5" y="158.3" width="1.6" height="4.5" fill="#8a8a8a"/><rect x="124.5" y="169.8" width="1.6" height="4.5" fill="#707070"/>
<rect x="94.7" y="177.8" width="14.3" height="19.2" fill="#000"/>
<rect x="113" y="177.8" width="14.3" height="19.2" fill="#000"/>
<rect x="96" y="179.3" width="1.6" height="4.5" fill="#8a8a8a"/><rect x="96" y="190.8" width="1.6" height="4.5" fill="#707070"/>
<rect x="124.5" y="179.3" width="1.6" height="4.5" fill="#8a8a8a"/><rect x="124.5" y="190.8" width="1.6" height="4.5" fill="#707070"/>
<rect x="94.7" y="198.8" width="14.3" height="19.2" fill="#000"/>
<rect x="113" y="198.8" width="14.3" height="19.2" fill="#000"/>
<rect x="96" y="200.3" width="1.6" height="4.5" fill="#8a8a8a"/><rect x="96" y="211.8" width="1.6" height="4.5" fill="#707070"/>
<rect x="124.5" y="200.3" width="1.6" height="4.5" fill="#8a8a8a"/><rect x="124.5" y="211.8" width="1.6" height="4.5" fill="#707070"/>
<rect x="94.7" y="219.8" width="14.3" height="19.2" fill="#000"/>
<rect x="113" y="219.8" width="14.3" height="19.2" fill="#000"/>
<rect x="96" y="221.3" width="1.6" height="4.5" fill="#8a8a8a"/><rect x="96" y="232.8" width="1.6" height="4.5" fill="#707070"/>
<rect x="124.5" y="221.3" width="1.6" height="4.5" fill="#8a8a8a"/><rect x="124.5" y="232.8" width="1.6" height="4.5" fill="#707070"/>
<rect x="96" y="118.5" width="2" height="2" fill="#fff"/>
<path d="M99.5 138h7.5v15h-7.5v-4h-1.5v-7h1.5z" fill="#00e000"/>
<rect x="96" y="136" width="2" height="4" fill="#00e000"/><rect x="96" y="150" width="2" height="4" fill="#f07010"/>
<text x="30" y="122" font-size="6.5" font-weight="bold" fill="#111">2</text>
<text x="71" y="122" font-size="6.5" font-weight="bold" fill="#111">1</text>
<text x="29" y="238" font-size="6" font-weight="bold" fill="#111">16</text>
<text x="70" y="238" font-size="6" font-weight="bold" fill="#111">11</text>
<text x="90" y="122" font-size="6.5" font-weight="bold" fill="#111">2</text>
<text x="131" y="122" font-size="6.5" font-weight="bold" fill="#111">1</text>
<text x="89" y="238" font-size="6" font-weight="bold" fill="#111">16</text>
<text x="130" y="238" font-size="6" font-weight="bold" fill="#111">11</text>
<rect x="154.5" y="114.5" width="18" height="124" fill="#e0e0e4" stroke="#000" stroke-width="1"/>
<rect x="156" y="116" width="14.5" height="29" fill="#000"/>
<rect x="156" y="147" width="14.5" height="29" fill="#000"/>
<rect x="156" y="178" width="14.5" height="29" fill="#000"/>
<rect x="156" y="209" width="14.5" height="29" fill="#000"/>
<path d="M178.3 127.0l2.5 2.5l-2.5 2.5l-2.5-2.5z" fill="none" stroke="#333" stroke-width="0.9"/>
<text x="184" y="132.5" font-size="7.5" font-weight="bold" fill="#000">1</text>
<path d="M178.3 158.0l2.5 2.5l-2.5 2.5l-2.5-2.5z" fill="none" stroke="#333" stroke-width="0.9"/>
<text x="184" y="163.5" font-size="7.5" font-weight="bold" fill="#000">5</text>
<path d="M178.3 189.0l2.5 2.5l-2.5 2.5l-2.5-2.5z" fill="none" stroke="#333" stroke-width="0.9"/>
<text x="184" y="194.5" font-size="7.5" font-weight="bold" fill="#000">9</text>
<path d="M178.3 220.0l2.5 2.5l-2.5 2.5l-2.5-2.5z" fill="none" stroke="#333" stroke-width="0.9"/>
<text x="184" y="225.5" font-size="7.5" font-weight="bold" fill="#000">13</text>
<rect x="497" y="84" width="1" height="186" fill="#2a2a2a"/>
<rect x="498" y="82" width="180" height="190" fill="#a9a9ad"/>
<rect x="498" y="82" width="172" height="2" fill="#b8b8c0"/>
<rect x="502" y="94" width="5" height="58" fill="#000"/>
<rect x="507" y="85" width="159" height="67" fill="#000"/>
<path d="M507.5 143V86.5H661M507.5 143.5H661" fill="none" stroke="#c4c4cc" stroke-width="1"/>
<rect x="498" y="94" width="3" height="58" fill="#b4b4b8"/><rect x="501" y="94" width="1" height="58" fill="#f0f0f0"/>
<rect x="661" y="94" width="5" height="48" fill="#a0a0a4"/>
<circle cx="525.4" cy="93.8" r="2.45" fill="#505054"/>
<circle cx="532.6" cy="93.8" r="2.45" fill="#505054"/>
<circle cx="539.8" cy="93.8" r="2.45" fill="#505054"/>
<circle cx="547.0" cy="93.8" r="2.45" fill="#505054"/>
<circle cx="554.2" cy="93.8" r="2.45" fill="#505054"/>
<circle cx="561.4" cy="93.8" r="2.45" fill="#505054"/>
<circle cx="568.6" cy="93.8" r="2.45" fill="#505054"/>
<circle cx="575.8" cy="93.8" r="2.45" fill="#505054"/>
<circle cx="583.0" cy="93.8" r="2.45" fill="#505054"/>
<circle cx="590.2" cy="93.8" r="2.45" fill="#505054"/>
<circle cx="597.4" cy="93.8" r="2.45" fill="#505054"/>
<circle cx="604.6" cy="93.8" r="2.45" fill="#505054"/>
<circle cx="611.8" cy="93.8" r="2.45" fill="#505054"/>
<circle cx="619.0" cy="93.8" r="2.45" fill="#505054"/>
<circle cx="626.2" cy="93.8" r="2.45" fill="#505054"/>
<circle cx="633.4" cy="93.8" r="2.45" fill="#505054"/>
<circle cx="640.6" cy="93.8" r="2.45" fill="#505054"/>
<circle cx="647.8" cy="93.8" r="2.45" fill="#505054"/>
<circle cx="655.0" cy="93.8" r="2.45" fill="#505054"/>
<circle cx="521.8" cy="101.0" r="2.45" fill="#505054"/>
<circle cx="529.0" cy="101.0" r="2.45" fill="#505054"/>
<circle cx="536.2" cy="101.0" r="2.45" fill="#505054"/>
<circle cx="543.4" cy="101.0" r="2.45" fill="#505054"/>
<circle cx="550.6" cy="101.0" r="2.45" fill="#505054"/>
<circle cx="557.8" cy="101.0" r="2.45" fill="#505054"/>
<circle cx="565.0" cy="101.0" r="2.45" fill="#505054"/>
<circle cx="572.2" cy="101.0" r="2.45" fill="#505054"/>
<circle cx="579.4" cy="101.0" r="2.45" fill="#505054"/>
<circle cx="586.6" cy="101.0" r="2.45" fill="#505054"/>
<circle cx="593.8" cy="101.0" r="2.45" fill="#505054"/>
<circle cx="601.0" cy="101.0" r="2.45" fill="#505054"/>
<circle cx="608.2" cy="101.0" r="2.45" fill="#505054"/>
<circle cx="615.4" cy="101.0" r="2.45" fill="#505054"/>
<circle cx="622.6" cy="101.0" r="2.45" fill="#505054"/>
<circle cx="629.8" cy="101.0" r="2.45" fill="#505054"/>
<circle cx="637.0" cy="101.0" r="2.45" fill="#505054"/>
<circle cx="644.2" cy="101.0" r="2.45" fill="#505054"/>
<circle cx="651.4" cy="101.0" r="2.45" fill="#505054"/>
<circle cx="525.4" cy="108.1" r="2.45" fill="#505054"/>
<circle cx="532.6" cy="108.1" r="2.45" fill="#505054"/>
<circle cx="539.8" cy="108.1" r="2.45" fill="#505054"/>
<circle cx="547.0" cy="108.1" r="2.45" fill="#505054"/>
<circle cx="554.2" cy="108.1" r="2.45" fill="#505054"/>
<circle cx="561.4" cy="108.1" r="2.45" fill="#505054"/>
<circle cx="568.6" cy="108.1" r="2.45" fill="#505054"/>
<circle cx="575.8" cy="108.1" r="2.45" fill="#505054"/>
<circle cx="583.0" cy="108.1" r="2.45" fill="#505054"/>
<circle cx="590.2" cy="108.1" r="2.45" fill="#505054"/>
<circle cx="597.4" cy="108.1" r="2.45" fill="#505054"/>
<circle cx="604.6" cy="108.1" r="2.45" fill="#505054"/>
<circle cx="611.8" cy="108.1" r="2.45" fill="#505054"/>
<circle cx="619.0" cy="108.1" r="2.45" fill="#505054"/>
<circle cx="626.2" cy="108.1" r="2.45" fill="#505054"/>
<circle cx="633.4" cy="108.1" r="2.45" fill="#505054"/>
<circle cx="640.6" cy="108.1" r="2.45" fill="#505054"/>
<circle cx="647.8" cy="108.1" r="2.45" fill="#505054"/>
<circle cx="655.0" cy="108.1" r="2.45" fill="#505054"/>
<circle cx="521.8" cy="115.2" r="2.45" fill="#505054"/>
<circle cx="529.0" cy="115.2" r="2.45" fill="#505054"/>
<circle cx="536.2" cy="115.2" r="2.45" fill="#505054"/>
<circle cx="543.4" cy="115.2" r="2.45" fill="#505054"/>
<circle cx="550.6" cy="115.2" r="2.45" fill="#505054"/>
<circle cx="557.8" cy="115.2" r="2.45" fill="#505054"/>
<circle cx="565.0" cy="115.2" r="2.45" fill="#505054"/>
<circle cx="572.2" cy="115.2" r="2.45" fill="#505054"/>
<circle cx="579.4" cy="115.2" r="2.45" fill="#505054"/>
<circle cx="586.6" cy="115.2" r="2.45" fill="#505054"/>
<circle cx="593.8" cy="115.2" r="2.45" fill="#505054"/>
<circle cx="601.0" cy="115.2" r="2.45" fill="#505054"/>
<circle cx="608.2" cy="115.2" r="2.45" fill="#505054"/>
<circle cx="615.4" cy="115.2" r="2.45" fill="#505054"/>
<circle cx="622.6" cy="115.2" r="2.45" fill="#505054"/>
<circle cx="629.8" cy="115.2" r="2.45" fill="#505054"/>
<circle cx="637.0" cy="115.2" r="2.45" fill="#505054"/>
<circle cx="644.2" cy="115.2" r="2.45" fill="#505054"/>
<circle cx="651.4" cy="115.2" r="2.45" fill="#505054"/>
<circle cx="525.4" cy="122.4" r="2.45" fill="#505054"/>
<circle cx="532.6" cy="122.4" r="2.45" fill="#505054"/>
<circle cx="539.8" cy="122.4" r="2.45" fill="#505054"/>
<circle cx="547.0" cy="122.4" r="2.45" fill="#505054"/>
<circle cx="554.2" cy="122.4" r="2.45" fill="#505054"/>
<circle cx="561.4" cy="122.4" r="2.45" fill="#505054"/>
<circle cx="568.6" cy="122.4" r="2.45" fill="#505054"/>
<circle cx="575.8" cy="122.4" r="2.45" fill="#505054"/>
<circle cx="583.0" cy="122.4" r="2.45" fill="#505054"/>
<circle cx="590.2" cy="122.4" r="2.45" fill="#505054"/>
<circle cx="597.4" cy="122.4" r="2.45" fill="#505054"/>
<circle cx="604.6" cy="122.4" r="2.45" fill="#505054"/>
<circle cx="611.8" cy="122.4" r="2.45" fill="#505054"/>
<circle cx="619.0" cy="122.4" r="2.45" fill="#505054"/>
<circle cx="626.2" cy="122.4" r="2.45" fill="#505054"/>
<circle cx="633.4" cy="122.4" r="2.45" fill="#505054"/>
<circle cx="640.6" cy="122.4" r="2.45" fill="#505054"/>
<circle cx="647.8" cy="122.4" r="2.45" fill="#505054"/>
<circle cx="655.0" cy="122.4" r="2.45" fill="#505054"/>
<circle cx="521.8" cy="129.6" r="2.45" fill="#505054"/>
<circle cx="529.0" cy="129.6" r="2.45" fill="#505054"/>
<circle cx="536.2" cy="129.6" r="2.45" fill="#505054"/>
<circle cx="543.4" cy="129.6" r="2.45" fill="#505054"/>
<circle cx="550.6" cy="129.6" r="2.45" fill="#505054"/>
<circle cx="557.8" cy="129.6" r="2.45" fill="#505054"/>
<circle cx="565.0" cy="129.6" r="2.45" fill="#505054"/>
<circle cx="572.2" cy="129.6" r="2.45" fill="#505054"/>
<circle cx="579.4" cy="129.6" r="2.45" fill="#505054"/>
<circle cx="586.6" cy="129.6" r="2.45" fill="#505054"/>
<circle cx="593.8" cy="129.6" r="2.45" fill="#505054"/>
<circle cx="601.0" cy="129.6" r="2.45" fill="#505054"/>
<circle cx="608.2" cy="129.6" r="2.45" fill="#505054"/>
<circle cx="615.4" cy="129.6" r="2.45" fill="#505054"/>
<circle cx="622.6" cy="129.6" r="2.45" fill="#505054"/>
<circle cx="629.8" cy="129.6" r="2.45" fill="#505054"/>
<circle cx="637.0" cy="129.6" r="2.45" fill="#505054"/>
<circle cx="644.2" cy="129.6" r="2.45" fill="#505054"/>
<circle cx="651.4" cy="129.6" r="2.45" fill="#505054"/>
<circle cx="525.4" cy="136.7" r="2.45" fill="#505054"/>
<circle cx="532.6" cy="136.7" r="2.45" fill="#505054"/>
<circle cx="539.8" cy="136.7" r="2.45" fill="#505054"/>
<circle cx="547.0" cy="136.7" r="2.45" fill="#505054"/>
<circle cx="554.2" cy="136.7" r="2.45" fill="#505054"/>
<circle cx="561.4" cy="136.7" r="2.45" fill="#505054"/>
<circle cx="568.6" cy="136.7" r="2.45" fill="#505054"/>
<circle cx="575.8" cy="136.7" r="2.45" fill="#505054"/>
<circle cx="583.0" cy="136.7" r="2.45" fill="#505054"/>
<circle cx="590.2" cy="136.7" r="2.45" fill="#505054"/>
<circle cx="597.4" cy="136.7" r="2.45" fill="#505054"/>
<circle cx="604.6" cy="136.7" r="2.45" fill="#505054"/>
<circle cx="611.8" cy="136.7" r="2.45" fill="#505054"/>
<circle cx="619.0" cy="136.7" r="2.45" fill="#505054"/>
<circle cx="626.2" cy="136.7" r="2.45" fill="#505054"/>
<circle cx="633.4" cy="136.7" r="2.45" fill="#505054"/>
<circle cx="640.6" cy="136.7" r="2.45" fill="#505054"/>
<circle cx="647.8" cy="136.7" r="2.45" fill="#505054"/>
<circle cx="655.0" cy="136.7" r="2.45" fill="#505054"/>
<circle cx="511" cy="103" r="1.3" fill="#20e020"/><circle cx="511" cy="113" r="1.3" fill="#20e020"/><circle cx="511" cy="123" r="1.2" fill="#909090"/>
<rect x="513" y="99" width="8" height="8" fill="#000"/><rect x="513" y="109" width="8" height="8" fill="#000"/><rect x="513" y="119" width="20" height="8" fill="#000"/>
<text x="513.5" y="106" font-size="6.5" font-weight="bold" fill="#fff">AC</text>
<text x="513.5" y="116" font-size="6.5" font-weight="bold" fill="#fff">DC</text>
<text x="513.5" y="126" font-size="6.5" font-weight="bold" fill="#fff" textLength="19" lengthAdjust="spacingAndGlyphs">FAULT</text>
<rect x="501" y="154" width="142" height="13" fill="#f0ae0c"/>
<g transform="translate(500,148.75) scale(0.75)"><path d="M8 19L17.3 11H18.8L17.8 19H14.2L13.3 17.3L12 19Z" fill="#222"/><path d="M19.2 11H31.6L25.8 19H18.6L22.4 14.2H19.2Z" fill="#222"/><path d="M27.6 19L31.2 14.4L34.6 19Z" fill="#222"/><circle cx="34.8" cy="13.4" r="2.7" fill="#e8702a"/></g>
<text x="529.5" y="164.3" font-size="9.5" fill="#3a3320" textLength="45" lengthAdjust="spacingAndGlyphs">Allied Telesis</text>
<text x="582" y="164.2" font-size="8" font-weight="bold" fill="#222" textLength="59.5" lengthAdjust="spacingAndGlyphs">AT-SBx908 GEN2</text>
<rect x="519" y="180.5" width="21" height="8.5" fill="#000" stroke="#888" stroke-width="0.6"/>
<rect x="520.5" y="185" width="18" height="2.5" fill="#fff"/>
<path d="M523 178h12M527 178l3-3h4M527 178l3 2h3" stroke="#222" stroke-width="0.9" fill="none"/>
<rect x="548" y="170" width="46" height="19" fill="#e8e8ec" stroke="#222" stroke-width="1"/>
<rect x="550" y="172" width="20" height="14" fill="#000"/>
<path d="M552 174.5h16v9h-16z" fill="#00e000"/>
<rect x="551.5" y="173" width="4" height="2" fill="#00e000"/><rect x="564.5" y="173" width="4" height="2" fill="#00e000"/>
<path d="M573 186v-9h4v-2h12v2h4v9z" fill="#000"/>
<text x="550" y="196" font-size="6.5" font-weight="bold" fill="#111" textLength="45" lengthAdjust="spacingAndGlyphs">ETH0 CONSOLE</text>
<rect x="598.5" y="170.5" width="12" height="17" fill="#000" stroke="#e0e0e0" stroke-width="1"/>
<path d="M606 173v5M606 180v5" stroke="#10d010" stroke-width="1.3"/>
<path d="M619 171h22v11l-5 6h-12l-5-6z" fill="#58a858"/>
<circle cx="630" cy="183" r="4" fill="#222"/>
<path d="M622 175q8 6 16 0" stroke="#333" stroke-width="1.5" fill="none"/>
<path d="M646 165.5l9.5-9.5l9.5 9.5z" fill="#333"/><text x="655.5" y="164.5" font-size="7" font-weight="bold" text-anchor="middle" fill="#e8a810">A</text>
<path d="M646 185l9.5 9.5l9.5-9.5z" fill="#333"/><text x="655.5" y="192" font-size="7" font-weight="bold" text-anchor="middle" fill="#e8a810">B</text>
<text x="655.5" y="176" font-size="6.5" text-anchor="middle" fill="#6a7490">PSU</text>
<text x="655.5" y="183" font-size="6.5" text-anchor="middle" fill="#6a7490">PSU</text>
<rect x="501" y="197" width="169" height="1" fill="#c8d0e0"/>
<rect x="502" y="200" width="166" height="67" fill="#000"/>
<path d="M507.5 257.5V200.5H661M662.5 209V257.5H507.5" fill="none" stroke="#a0a0a8" stroke-width="1"/>
<rect x="502" y="210" width="3" height="50" fill="#8c8c90"/>
<rect x="670" y="82" width="2" height="191" fill="#111"/>
<rect x="672" y="82" width="6" height="191" fill="#a0a0a4"/>
</svg>
<svg class="a" style="left:720px;top:80px" width="24" height="44">
<path d="M7.2 8.6A4.6 4.6 0 1 1 9.6 15" stroke="#3d9a3d" stroke-width="4.2" fill="none"/>
<path d="M7.2 8.6A4.6 4.6 0 1 1 9.6 15" stroke="#98cf98" stroke-width="2.4" fill="none"/>
<path d="M5.2 12.6L11.2 13.4L8.8 18.5Z" fill="#3d9a3d"/>
<path d="M6.4 13.2L10 13.7L8.6 16.4Z" fill="#98cf98"/>
<circle cx="11.2" cy="10.8" r="1.5" fill="#fff"/>
<circle cx="11.2" cy="32.6" r="7.8" fill="#6c96e6"/>
<circle cx="11" cy="31" r="6" fill="#a4c0f4" opacity="0.55"/>
<path d="M10.2 28v7.4h4.4" stroke="#2a3a6a" stroke-width="1" fill="none" transform="translate(-0.8,0.6)"/>
<path d="M10.2 28v7.4h4.4" stroke="#fff" stroke-width="1.8" fill="none"/>
</svg>

<!-- awplus tab -->
<div class="a" style="left:59px;top:278px;width:659px;height:1px;background:#88898e"></div>
<div class="a" style="left:10px;top:274px;width:49px;height:24px;background:#fff;border-left:1px solid #88898e;border-right:1px solid #88898e;border-bottom:1px solid #88898e"></div>
<div class="a" style="left:13px;top:279px;width:43px;height:16px;border:1px dotted #000"></div>
<div class="t" style="left:17px;top:283px;transform:scaleX(0.98)">awplus</div>

<!-- group box -->
<div class="a" style="left:12px;top:306px;width:729px;height:214px;border:1px solid #d3dbe3;border-radius:3px"></div>
<div class="a" style="left:17px;top:300px;width:38px;height:12px;background:#efefef"></div>
<div class="t" style="left:22px;top:301px;transform:scaleX(0.94)">Ports</div>

<!-- table -->
<div class="a" style="left:16px;top:316px;width:720px;height:199px;border:1px solid #8a8a8a;background:#efefef"></div>
<div class="a" style="left:17px;top:340px;width:701px;height:174px;background:#fff"></div>
<div class="hc" style="left:17px;width:99px"></div>
<div class="t" style="left:21px;top:324px;transform:scaleX(0.978);">Interface</div>
<div class="hc" style="left:117px;width:99px"></div>
<div class="t" style="left:122px;top:324px;transform:scaleX(0.974);">Description</div>
<div class="hc" style="left:217px;width:99px"></div>
<div class="t" style="left:222px;top:324px;transform:scaleX(0.969);">Link State</div>
<div class="hc" style="left:317px;width:99px"></div>
<div class="t" style="left:322px;top:324px;transform:scaleX(0.938);">Admin State</div>
<div class="hc" style="left:417px;width:99px"></div>
<div class="t" style="left:422px;top:324px;transform:scaleX(0.928);">Duplex</div>
<div class="hc" style="left:517px;width:100px"></div>
<div class="t" style="left:521px;top:324px;transform:scaleX(0.939);">Speed</div>
<div class="hc" style="left:618px;width:99px"></div>
<div class="t" style="left:622px;top:324px;">Uptime</div>
<div class="a" style="left:17px;top:338px;width:701px;height:1px;background:#d8d8d8"></div>
<div class="hl" style="left:17px;top:356px;width:701px"></div>
<div class="hl" style="left:17px;top:372px;width:701px"></div>
<div class="hl" style="left:17px;top:388px;width:701px"></div>
<div class="hl" style="left:17px;top:404px;width:701px"></div>
<div class="hl" style="left:17px;top:420px;width:701px"></div>
<div class="hl" style="left:17px;top:436px;width:701px"></div>
<div class="hl" style="left:17px;top:452px;width:701px"></div>
<div class="hl" style="left:17px;top:468px;width:701px"></div>
<div class="hl" style="left:17px;top:484px;width:701px"></div>
<div class="hl" style="left:17px;top:500px;width:701px"></div>
<div class="vl" style="left:116px;top:340px;height:174px"></div>
<div class="vl" style="left:216px;top:340px;height:174px"></div>
<div class="vl" style="left:316px;top:340px;height:174px"></div>
<div class="vl" style="left:416px;top:340px;height:174px"></div>
<div class="vl" style="left:516px;top:340px;height:174px"></div>
<div class="vl" style="left:617px;top:340px;height:174px"></div>
<div class="vl" style="left:717px;top:340px;height:174px"></div>
<div class="t" style="left:17px;top:343px;">eth0</div>
<div class="t" style="left:117px;top:343px;">eth0</div>
<div class="t" style="left:217px;top:343px;transform:scaleX(0.933);">up</div>
<div class="t" style="left:317px;top:343px;transform:scaleX(0.933);">up</div>
<div class="t" style="left:418px;top:343px;">full</div>
<div class="t" style="left:517px;top:343px;transform:scaleX(0.905);">1000 Mbps</div>
<div class="t" style="left:618px;top:343px;transform:scaleX(0.982);">11 mins 4 sec</div>
<div class="t" style="left:17px;top:359px;transform:scaleX(0.891);">port1.1.1</div>
<div class="t" style="left:117px;top:359px;transform:scaleX(0.891);">port1.1.1</div>
<div class="t" style="left:218px;top:359px;transform:scaleX(0.893);">down</div>
<div class="t" style="left:317px;top:359px;transform:scaleX(0.933);">up</div>
<div class="t" style="left:418px;top:359px;transform:scaleX(0.916);">auto</div>
<div class="t" style="left:518px;top:359px;transform:scaleX(0.916);">auto</div>
<div class="t" style="left:619px;top:359px;transform:scaleX(0.952);">0 millisecond</div>
<div class="t" style="left:17px;top:375px;transform:scaleX(0.891);">port1.1.2</div>
<div class="t" style="left:117px;top:375px;transform:scaleX(0.891);">port1.1.2</div>
<div class="t" style="left:218px;top:375px;transform:scaleX(0.893);">down</div>
<div class="t" style="left:317px;top:375px;transform:scaleX(0.933);">up</div>
<div class="t" style="left:418px;top:375px;transform:scaleX(0.916);">auto</div>
<div class="t" style="left:518px;top:375px;transform:scaleX(0.916);">auto</div>
<div class="t" style="left:619px;top:375px;transform:scaleX(0.952);">0 millisecond</div>
<div class="t" style="left:17px;top:391px;transform:scaleX(0.891);">port1.1.3</div>
<div class="t" style="left:117px;top:391px;transform:scaleX(0.891);">port1.1.3</div>
<div class="t" style="left:218px;top:391px;transform:scaleX(0.893);">down</div>
<div class="t" style="left:317px;top:391px;transform:scaleX(0.933);">up</div>
<div class="t" style="left:418px;top:391px;transform:scaleX(0.916);">auto</div>
<div class="t" style="left:518px;top:391px;transform:scaleX(0.916);">auto</div>
<div class="t" style="left:619px;top:391px;transform:scaleX(0.952);">0 millisecond</div>
<div class="t" style="left:17px;top:407px;transform:scaleX(0.891);">port1.1.4</div>
<div class="t" style="left:117px;top:407px;transform:scaleX(0.891);">port1.1.4</div>
<div class="t" style="left:218px;top:407px;transform:scaleX(0.893);">down</div>
<div class="t" style="left:317px;top:407px;transform:scaleX(0.933);">up</div>
<div class="t" style="left:418px;top:407px;transform:scaleX(0.916);">auto</div>
<div class="t" style="left:518px;top:407px;transform:scaleX(0.916);">auto</div>
<div class="t" style="left:619px;top:407px;transform:scaleX(0.952);">0 millisecond</div>
<div class="t" style="left:17px;top:423px;transform:scaleX(0.891);">port1.1.5</div>
<div class="t" style="left:117px;top:423px;transform:scaleX(0.891);">port1.1.5</div>
<div class="t" style="left:218px;top:423px;transform:scaleX(0.893);">down</div>
<div class="t" style="left:317px;top:423px;transform:scaleX(0.933);">up</div>
<div class="t" style="left:418px;top:423px;transform:scaleX(0.916);">auto</div>
<div class="t" style="left:518px;top:423px;transform:scaleX(0.916);">auto</div>
<div class="t" style="left:619px;top:423px;transform:scaleX(0.952);">0 millisecond</div>
<div class="t" style="left:17px;top:439px;transform:scaleX(0.891);">port1.1.6</div>
<div class="t" style="left:117px;top:439px;transform:scaleX(0.891);">port1.1.6</div>
<div class="t" style="left:218px;top:439px;transform:scaleX(0.893);">down</div>
<div class="t" style="left:317px;top:439px;transform:scaleX(0.933);">up</div>
<div class="t" style="left:418px;top:439px;transform:scaleX(0.916);">auto</div>
<div class="t" style="left:518px;top:439px;transform:scaleX(0.916);">auto</div>
<div class="t" style="left:619px;top:439px;transform:scaleX(0.952);">0 millisecond</div>
<div class="t" style="left:17px;top:455px;transform:scaleX(0.891);">port1.1.7</div>
<div class="t" style="left:117px;top:455px;transform:scaleX(0.891);">port1.1.7</div>
<div class="t" style="left:218px;top:455px;transform:scaleX(0.893);">down</div>
<div class="t" style="left:317px;top:455px;transform:scaleX(0.933);">up</div>
<div class="t" style="left:418px;top:455px;transform:scaleX(0.916);">auto</div>
<div class="t" style="left:518px;top:455px;transform:scaleX(0.916);">auto</div>
<div class="t" style="left:619px;top:455px;transform:scaleX(0.952);">0 millisecond</div>
<div class="t" style="left:17px;top:471px;transform:scaleX(0.891);">port1.1.8</div>
<div class="t" style="left:117px;top:471px;transform:scaleX(0.891);">port1.1.8</div>
<div class="t" style="left:218px;top:471px;transform:scaleX(0.893);">down</div>
<div class="t" style="left:317px;top:471px;transform:scaleX(0.933);">up</div>
<div class="t" style="left:418px;top:471px;transform:scaleX(0.916);">auto</div>
<div class="t" style="left:518px;top:471px;transform:scaleX(0.916);">auto</div>
<div class="t" style="left:619px;top:471px;transform:scaleX(0.952);">0 millisecond</div>
<div class="t" style="left:17px;top:487px;transform:scaleX(0.891);">port1.1.9</div>
<div class="t" style="left:117px;top:487px;transform:scaleX(0.891);">port1.1.9</div>
<div class="t" style="left:218px;top:487px;transform:scaleX(0.893);">down</div>
<div class="t" style="left:317px;top:487px;transform:scaleX(0.933);">up</div>
<div class="t" style="left:418px;top:487px;transform:scaleX(0.916);">auto</div>
<div class="t" style="left:518px;top:487px;transform:scaleX(0.916);">auto</div>
<div class="t" style="left:619px;top:487px;transform:scaleX(0.952);">0 millisecond</div>
<div class="t" style="left:17px;top:503px;transform:scaleX(0.900);">port1.1.10</div>
<div class="t" style="left:117px;top:503px;transform:scaleX(0.900);">port1.1.10</div>
<div class="t" style="left:218px;top:503px;transform:scaleX(0.893);">down</div>
<div class="t" style="left:317px;top:503px;transform:scaleX(0.933);">up</div>
<div class="t" style="left:418px;top:503px;transform:scaleX(0.916);">auto</div>
<div class="t" style="left:518px;top:503px;transform:scaleX(0.916);">auto</div>
<div class="t" style="left:619px;top:503px;transform:scaleX(0.952);">0 millisecond</div>
<!-- scrollbar -->
<svg class="a" style="left:718px;top:340px" width="17" height="174">
<defs><linearGradient id="th" x1="0" x2="1" y1="0" y2="0"><stop offset="0" stop-color="#e4e4e4"/><stop offset="0.35" stop-color="#f8f8f8"/><stop offset="0.7" stop-color="#e8e8e8"/><stop offset="1" stop-color="#cfcfcf"/></linearGradient></defs>
<path d="M5.8 12.2h7.2l-3.6-3.6z" fill="#4a4a4a"/>
<rect x="1.5" y="19.5" width="14" height="48" rx="1.5" fill="url(#th)" stroke="#a4a4a4"/>
<path d="M4.5 40.5h8M4.5 43.5h8M4.5 46.5h8" stroke="#666" stroke-width="1"/>
<path d="M5.8 163.8h7.2l-3.6 3.6z" fill="#4a4a4a"/>
</svg>

<!-- status bar -->
<div class="a" style="left:3px;top:531px;width:748px;height:26px;background:#efefef;border-style:solid;border-width:3px 1px 1px 2px;border-color:#fff #7a7a7a #7a7a7a #fff"></div>
<div class="a" style="left:586px;top:534px;width:164px;height:21px;border:2px solid;border-color:#8a8a8a #f8f8f8 #f8f8f8 #8a8a8a;background:#efefef"></div>
<div class="t" style="left:623px;top:539px;transform:scaleX(0.96)">17/08/15 6:51</div>
<svg class="a" style="left:726px;top:535px" width="22" height="20">
<path d="M5 15.5l-1.5 2.5M14.5 15.5l1.5 2.5" stroke="#909098" stroke-width="1.4"/>
<circle cx="9.6" cy="9.5" r="6.8" fill="#5b92dc"/>
<circle cx="9.4" cy="9.8" r="4.4" fill="#eef4ff"/>
<path d="M9.4 6.5v3.5l2 1.5" stroke="#445" stroke-width="1" fill="none"/>
<circle cx="5" cy="3.6" r="2.4" fill="#f2c23a"/><circle cx="14.6" cy="3.6" r="2.4" fill="#f2c23a"/>
<path d="M6.2 15.8L15.4 6.6L17.8 9L8.6 18.2L5.6 18.8z" fill="#f4cc40" stroke="#c89020" stroke-width="0.6"/>
</svg>
</body></html>
